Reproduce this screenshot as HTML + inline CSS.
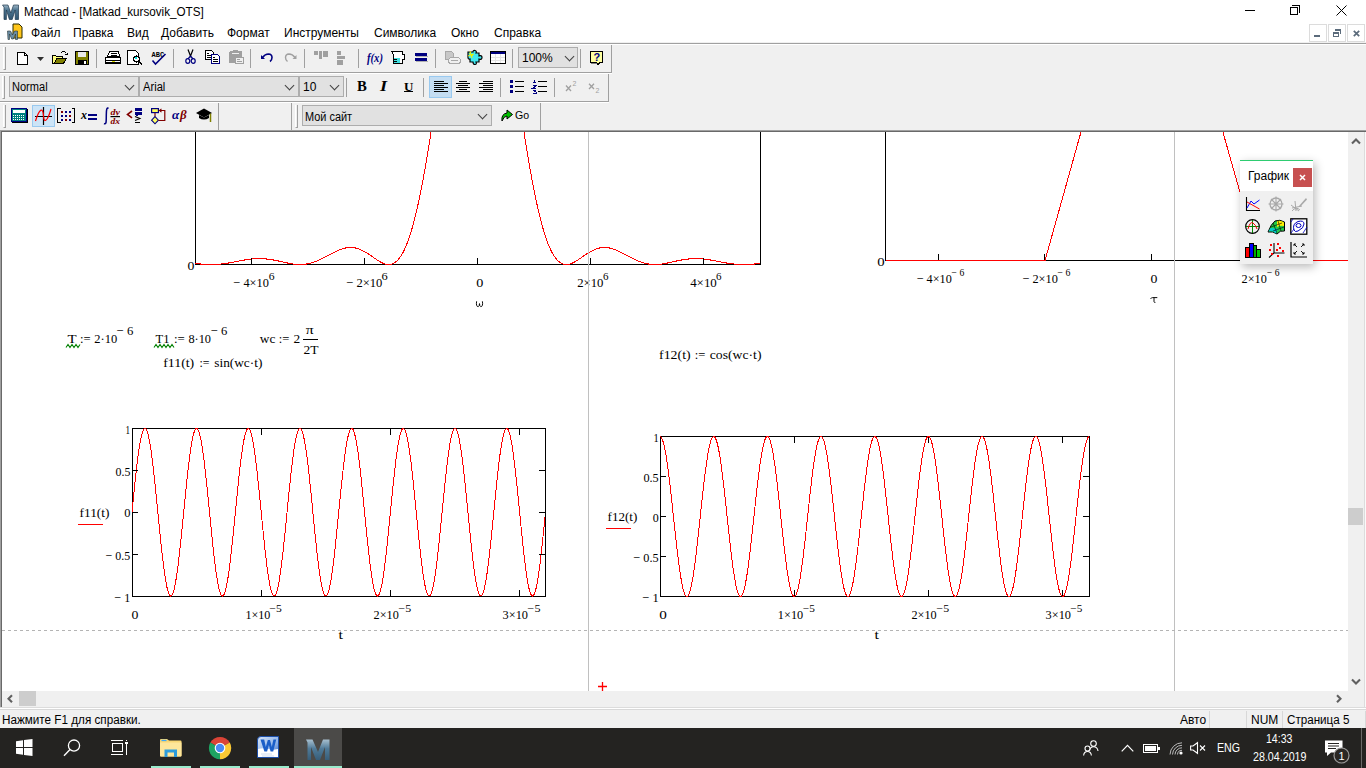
<!DOCTYPE html>
<html><head><meta charset="utf-8"><title>Mathcad</title>
<style>
*{box-sizing:border-box}
html,body{margin:0;padding:0}
body{width:1366px;height:768px;overflow:hidden;position:relative;background:#fff;font-family:"Liberation Sans",sans-serif;font-size:12px;color:#000}
.a{position:absolute}
.t{position:absolute;white-space:nowrap;line-height:1}
.tb{position:absolute;background:#f0f0f0}
.sep{position:absolute;width:1px;background:#a0a0a0}
.combo{position:absolute;background:#e1e1e1;border:1px solid #adadad}
.combo span{position:absolute;left:3px;top:3px;font-size:12px;color:#000;white-space:nowrap;line-height:14px}
.chev{position:absolute;width:7px;height:7px;border-right:1px solid #404040;border-bottom:1px solid #404040;transform:rotate(45deg)}
.grip{position:absolute;width:3px;border-left:1px solid #fff;border-right:1px solid #a0a0a0;border-bottom:1px solid #a0a0a0}
svg{position:absolute;overflow:visible}
</style></head>
<body>
<!-- title bar -->
<div class="a" style="left:0;top:0;width:1366px;height:43px;background:#fff"></div>
<svg style="left:2px;top:4px" width="17" height="16" viewBox="0 0 17 16">
 <defs><linearGradient id="tm" x1="0" y1="0" x2="0" y2="1"><stop offset="0" stop-color="#9fb6c6"/><stop offset="0.35" stop-color="#4d7590"/><stop offset="1" stop-color="#2f5470"/></linearGradient></defs>
 <path d="M0.5 1 H6 L8.8 9 L11.5 1 H16.5 V15.5 H13.2 V6 L10.2 15.5 H7.4 L4.4 6 V15.5 H2 V3.2 Z" fill="url(#tm)" stroke="#1f3a4f" stroke-width="0.7"/>
</svg>
<div class="t" id="title" style="left:24px;top:6px;font-size:12px;color:#000;transform:scaleX(0.973);transform-origin:0 0">Mathcad - [Matkad_kursovik_OTS]</div>
<div class="a" style="left:1245px;top:10px;width:10px;height:1px;background:#000"></div>
<div class="a" style="left:1290px;top:7px;width:8px;height:8px;border:1px solid #000"></div>
<div class="a" style="left:1292px;top:5px;width:8px;height:8px;border-top:1px solid #000;border-right:1px solid #000"></div>
<svg style="left:1336px;top:5px" width="11" height="11" viewBox="0 0 11 11"><path d="M0.5 0.5 L10.5 10.5 M10.5 0.5 L0.5 10.5" stroke="#000" stroke-width="1"/></svg>

<!-- menu bar -->
<svg style="left:7px;top:23px" width="16" height="17" viewBox="0 0 16 17">
 <path d="M6 1 H12 L15 4 V15 H6 Z" fill="#ffc61a" stroke="#2a2a00" stroke-width="1"/>
 <path d="M0.5 8 H3.5 L5.5 12 L7.5 8 H10.5 V16.5 H8.5 V11 L6.3 16 H4.7 L2.5 11 V16.5 H1 Z" fill="#6d8ea6" stroke="#233" stroke-width="0.6"/>
</svg>
<div class="t menu" style="left:31px;top:27px">Файл</div>
<div class="t menu" style="left:73px;top:27px">Правка</div>
<div class="t menu" style="left:127px;top:27px">Вид</div>
<div class="t menu" style="left:161px;top:27px">Добавить</div>
<div class="t menu" style="left:227px;top:27px">Формат</div>
<div class="t menu" style="left:284px;top:27px">Инструменты</div>
<div class="t menu" style="left:374px;top:27px">Символика</div>
<div class="t menu" style="left:451px;top:27px">Окно</div>
<div class="t menu" style="left:494px;top:27px">Справка</div>
<!-- MDI buttons -->
<div class="a" style="left:1309px;top:24px;width:18px;height:18px;border:1px solid #dcdcdc;background:#fff"></div>
<div class="a" style="left:1328px;top:24px;width:18px;height:18px;border:1px solid #dcdcdc;background:#fff"></div>
<div class="a" style="left:1347px;top:24px;width:18px;height:18px;border:1px solid #dcdcdc;background:#fff"></div>
<div class="a" style="left:1314px;top:35px;width:6px;height:2px;background:#5b6b7b"></div>
<svg style="left:1333px;top:29px" width="9" height="9" viewBox="0 0 9 9" shape-rendering="crispEdges">
 <rect x="2" y="0" width="6" height="2" fill="#5b6b7b"/><rect x="7" y="0" width="1" height="5" fill="#5b6b7b"/>
 <rect x="0" y="3" width="6" height="2" fill="#5b6b7b"/><rect x="0" y="3" width="1" height="5" fill="#5b6b7b"/><rect x="5" y="3" width="1" height="5" fill="#5b6b7b"/><rect x="0" y="7" width="6" height="1" fill="#5b6b7b"/>
</svg>
<svg style="left:1353px;top:30px" width="7" height="7" viewBox="0 0 7 7"><path d="M0.8 0.8 L6.2 6.2 M6.2 0.8 L0.8 6.2" stroke="#5b6b7b" stroke-width="1.7"/></svg>

<div class="a" style="left:0;top:42px;width:1366px;height:1px;background:#f0f0f0"></div><div class="a" style="left:0;top:43px;width:1366px;height:1px;background:#a0a0a0"></div>
<div class="a" style="left:0;top:44px;width:1366px;height:87px;background:#f0f0f0"></div>
<!-- ============ toolbar row 1 ============ -->
<div class="a" style="left:0;top:44px;width:1366px;height:1px;background:#fff"></div>
<div class="a" style="left:0;top:72px;width:612px;height:1px;background:#a0a0a0"></div>
<div class="a" style="left:0;top:73px;width:612px;height:1px;background:#fff"></div>
<div class="a" style="left:611px;top:45px;width:1px;height:28px;background:#a0a0a0"></div>
<div class="grip" style="left:3px;top:47px;height:23px"></div>
<div class="sep" style="left:96px;top:49px;height:19px"></div>
<div class="sep" style="left:173px;top:49px;height:19px"></div>
<div class="sep" style="left:250px;top:49px;height:19px"></div>
<div class="sep" style="left:304px;top:49px;height:19px"></div>
<div class="sep" style="left:358px;top:49px;height:19px"></div>
<div class="sep" style="left:435px;top:49px;height:19px"></div>
<div class="sep" style="left:512px;top:49px;height:19px"></div>
<div class="sep" style="left:580px;top:49px;height:19px"></div>

<!-- new -->
<svg style="left:17px;top:52px" width="12" height="14" viewBox="0 0 12 14" shape-rendering="crispEdges">
 <path d="M0.5 0.5 H7.5 L10.5 3.5 V12.5 H0.5 Z" fill="#fff" stroke="#000"/><path d="M7.5 0.5 V3.5 H10.5" fill="none" stroke="#000"/>
</svg>
<svg style="left:37px;top:57px" width="7" height="4" viewBox="0 0 7 4"><path d="M0 0 H7 L3.5 4Z" fill="#303030"/></svg>
<!-- open -->
<svg style="left:52px;top:51px" width="16" height="14" viewBox="0 0 16 14" shape-rendering="crispEdges">
 <path d="M0.5 4.5 H3.5 L4.5 5.5 H10.5 V7.5 H14.5 L11.5 12.5 H0.5 Z" fill="#ffff80" stroke="#000"/>
 <path d="M2.5 12.5 L4.5 7.5 H14.5 L11.5 12.5 Z" fill="#808000" stroke="#000"/>
 <path d="M8.5 2.5 L10.5 0.5 H12.5 L14.5 2.5 M13 3.5 H15 V1.5" fill="none" stroke="#000"/>
</svg>
<!-- save -->
<svg style="left:75px;top:51px" width="15" height="14" viewBox="0 0 15 14" shape-rendering="crispEdges">
 <rect x="0.5" y="0.5" width="13" height="13" fill="#808000" stroke="#000"/>
 <rect x="3" y="1" width="8" height="5" fill="#e8e8e8"/>
 <rect x="3" y="9" width="9" height="4" fill="#000"/>
 <rect x="9" y="10" width="2" height="3" fill="#fff"/>
</svg>
<!-- print -->
<svg style="left:105px;top:51px" width="17" height="14" viewBox="0 0 17 14" shape-rendering="crispEdges">
 <path d="M4.5 0.5 H13.5 L14.5 5.5 H2.5 Z" fill="#fff" stroke="#000"/>
 <path d="M5.5 2.5 H12 M5.5 4 H12" stroke="#000"/>
 <path d="M0.5 6.5 H15.5 V12.5 H0.5 Z" fill="#fff" stroke="#000"/>
 <path d="M1 9.5 H15 M1 11 H15" stroke="#000"/>
 <rect x="7" y="10" width="3" height="1" fill="#e0e000"/>
</svg>
<!-- preview -->
<svg style="left:127px;top:50px" width="17" height="16" viewBox="0 0 17 16" shape-rendering="crispEdges">
 <path d="M0.5 0.5 H8.5 L11.5 3.5 V14.5 H0.5 Z" fill="#fff" stroke="#000"/>
 <circle cx="9.5" cy="9" r="3" fill="#fff" stroke="#000" stroke-width="1.2"/>
 <path d="M8 8 h2" stroke="#00e0e0" stroke-width="2"/>
 <path d="M11.5 11 L15 14.5" stroke="#000" stroke-width="2"/>
</svg>
<!-- spell -->
<svg style="left:151px;top:50px" width="16" height="16" viewBox="0 0 16 16">
 <text x="0.5" y="6.5" font-family="Liberation Mono" font-size="7" font-weight="bold" fill="#000">ABC</text>
 <path d="M1.5 10.5 L4.5 14 L14.5 4" fill="none" stroke="#000080" stroke-width="1.6"/>
</svg>
<!-- cut -->
<svg style="left:185px;top:49px" width="11" height="15" viewBox="0 0 11 15">
 <path d="M3 0.5 L5.5 7 L8 0.5" fill="none" stroke="#000" stroke-width="1.2"/>
 <path d="M5.5 7 L3 10 M5.5 7 L8 10" stroke="#000080" stroke-width="1.2"/>
 <ellipse cx="2.8" cy="12" rx="2" ry="2.3" fill="none" stroke="#000080" stroke-width="1.2"/>
 <ellipse cx="8.2" cy="12" rx="2" ry="2.3" fill="none" stroke="#000080" stroke-width="1.2"/>
</svg>
<!-- copy -->
<svg style="left:205px;top:50px" width="17" height="14" viewBox="0 0 17 14" shape-rendering="crispEdges">
 <path d="M0.5 0.5 H6.5 L8.5 2.5 V9.5 H0.5 Z" fill="#fff" stroke="#000"/>
 <path d="M2 3.5 H4 M2 5.5 H6 M2 7.5 H6" stroke="#000"/>
 <path d="M6.5 4.5 H12.5 L14.5 6.5 V13.5 H6.5 Z" fill="#fff" stroke="#000080"/>
 <path d="M8 7.5 H10 M8 9.5 H13 M8 11.5 H13" stroke="#000"/>
</svg>
<!-- paste (disabled) -->
<svg style="left:229px;top:50px" width="16" height="14" viewBox="0 0 16 14" shape-rendering="crispEdges">
 <rect x="0" y="1" width="13" height="12" rx="2" fill="#a0a0a0"/>
 <rect x="4" y="0" width="5" height="2" fill="#a0a0a0"/>
 <rect x="3" y="3" width="7" height="1" fill="#f0f0f0"/>
 <rect x="6.5" y="7.5" width="8" height="6" fill="#f0f0f0" stroke="#a0a0a0"/>
 <path d="M8 9.5 H11 M8 11.5 H13" stroke="#a0a0a0"/>
</svg>
<!-- undo -->
<svg style="left:261px;top:53px" width="13" height="11" viewBox="0 0 13 11">
 <path d="M0 2 L0 6 L4 6 Z" fill="#000080"/>
 <path d="M1.5 4.5 Q4 1 7.5 1 Q11 1.2 11 4.5 Q11 7 9 8.5" fill="none" stroke="#000080" stroke-width="1.6"/>
</svg>
<!-- redo (disabled) -->
<svg style="left:284px;top:53px" width="13" height="11" viewBox="0 0 13 11">
 <path d="M12.5 2 L12.5 6 L8.5 6 Z" fill="#a0a0a0"/>
 <path d="M11 4.5 Q8.5 1 5 1 Q1.5 1.2 1.5 4.5 Q1.5 7 3.5 8.5" fill="none" stroke="#a0a0a0" stroke-width="1.4"/>
</svg>
<!-- align (disabled) -->
<svg style="left:314px;top:51px" width="15" height="8" viewBox="0 0 15 8" shape-rendering="crispEdges">
 <rect x="0" y="0" width="4" height="4" fill="#a0a0a0"/><rect x="5" y="0" width="3" height="8" fill="#a0a0a0"/><rect x="9" y="0" width="5" height="6" fill="#a0a0a0"/>
</svg>
<svg style="left:337px;top:51px" width="9" height="14" viewBox="0 0 9 14" shape-rendering="crispEdges">
 <rect x="0" y="0" width="4" height="4" fill="#a0a0a0"/><rect x="0" y="5" width="8" height="3" fill="#a0a0a0"/><rect x="0" y="9" width="6" height="5" fill="#a0a0a0"/>
</svg>
<!-- f(x) -->
<svg style="left:367px;top:51px" width="17" height="14" viewBox="0 0 17 14">
 <text x="0" y="11" font-family="Liberation Serif" font-style="italic" font-weight="bold" font-size="13" fill="#000080" textLength="16" lengthAdjust="spacingAndGlyphs">f(x)</text>
</svg>
<!-- calc -->
<svg style="left:391px;top:51px" width="15" height="14" viewBox="0 0 15 14" shape-rendering="crispEdges">
 <path d="M0.5 0.5 H11.5 V3.5 H13.5 V8.5 H11.5 V12.5 H2.5 V3.5 Z" fill="#fff" stroke="#000"/>
 <rect x="3" y="7" width="6" height="5" fill="#40e0e0"/>
 <path d="M3 8.5 h3 M3 10.5 h3" stroke="#000"/>
</svg>
<!-- equals -->
<svg style="left:415px;top:52px" width="13" height="11" viewBox="0 0 13 11" shape-rendering="crispEdges">
 <rect x="0" y="1" width="12" height="3" fill="#000080"/><rect x="0" y="6" width="12" height="3" fill="#000080"/>
 <rect x="1" y="4" width="12" height="1" fill="#b0b0b0"/><rect x="1" y="9" width="12" height="1" fill="#b0b0b0"/>
</svg>
<!-- link (disabled) -->
<svg style="left:445px;top:51px" width="16" height="13" viewBox="0 0 16 13" shape-rendering="crispEdges">
 <path d="M0.5 0.5 H6.5 L8.5 2.5 V8.5 H0.5 Z" fill="#c8c8c8" stroke="#a8a8a8"/>
 <rect x="3.5" y="6.5" width="12" height="6" rx="3" fill="#f0f0f0" stroke="#a8a8a8"/>
 <rect x="6" y="9" width="7" height="1" fill="#a8a8a8"/>
</svg>
<!-- component (puzzle) -->
<svg style="left:467px;top:50px" width="16" height="15" viewBox="0 0 16 15">
 <path d="M1 2 H6 Q6 0 8 0.5 Q10 1 9 3 H12 V6 Q15 5 15 7.5 Q15 10 12 9 V12 H9 Q10 14.5 8 14.5 Q6 14.5 6 12 H3 V9 Q1 9.5 1 7.5 Z" fill="#40e8f0" stroke="#000" stroke-width="1.2"/>
 <path d="M2 3 L6 6 M3 1 L5 8 M1 6 L7 4" stroke="#f0f000" stroke-width="1"/>
</svg>
<!-- table -->
<svg style="left:490px;top:51px" width="17" height="14" viewBox="0 0 17 14" shape-rendering="crispEdges">
 <rect x="0.5" y="0.5" width="15" height="12" fill="#fff" stroke="#000"/>
 <rect x="1" y="1" width="14" height="2" fill="#000080"/>
 <path d="M1 6.5 H15 M1 9.5 H15 M5.5 3 V12 M10.5 3 V12" stroke="#e4e4e4"/>
</svg>
<!-- zoom combo -->
<div class="combo" style="left:518px;top:47px;width:60px;height:21px"><span style="top:3px;left:3px" id="zoomtxt">100%</span><div class="chev" style="left:47px;top:5px"></div></div>
<!-- help -->
<svg style="left:590px;top:51px" width="14" height="15" viewBox="0 0 14 15" shape-rendering="crispEdges">
 <path d="M0.5 0.5 H12.5 V11.5 H9.5 L8 14 L6.5 11.5 H0.5 Z" fill="#ffffa0" stroke="#000" stroke-width="1.2"/>
 <rect x="1" y="12" width="6" height="1" fill="#808080"/>
 <text x="3.5" y="10" font-family="Liberation Sans" font-weight="bold" font-size="11" fill="#000080">?</text>
</svg>

<!-- ============ toolbar row 2 ============ -->
<div class="a" style="left:0;top:101px;width:609px;height:1px;background:#a0a0a0"></div>
<div class="a" style="left:0;top:102px;width:609px;height:1px;background:#fff"></div>
<div class="a" style="left:608px;top:74px;width:1px;height:28px;background:#a0a0a0"></div>
<div class="grip" style="left:2px;top:76px;height:23px"></div>
<div class="combo" style="left:9px;top:76px;width:130px;height:21px"><span id="normtxt" style="left:2px;transform:scaleX(0.92);transform-origin:0 0">Normal</span><div class="chev" style="left:116px;top:5px"></div></div>
<div class="combo" style="left:139px;top:76px;width:160px;height:21px"><span id="arialtxt" style="transform:scaleX(0.93);transform-origin:0 0">Arial</span><div class="chev" style="left:146px;top:5px"></div></div>
<div class="combo" style="left:299px;top:76px;width:45px;height:21px"><span id="tentxt">10</span><div class="chev" style="left:31px;top:5px"></div></div>
<div class="sep" style="left:346px;top:78px;height:19px"></div>
<div class="sep" style="left:423px;top:78px;height:19px"></div>
<div class="sep" style="left:500px;top:78px;height:19px"></div>
<div class="sep" style="left:554px;top:78px;height:19px"></div>
<div class="t" style="left:357px;top:80px;font-family:'Liberation Serif';font-weight:bold;font-size:14px;transform:scaleX(1.05);transform-origin:0 0">B</div>
<div class="t" style="left:380px;top:80px;font-family:'Liberation Serif';font-weight:bold;font-style:italic;font-size:14px;transform:scaleX(1.3);transform-origin:0 0">I</div>
<div class="t" style="left:404px;top:80px;font-family:'Liberation Serif';font-weight:bold;font-size:13px">U</div>
<div class="a" style="left:404px;top:91px;width:9px;height:1px;background:#000"></div>
<div class="a" style="left:429px;top:76px;width:23px;height:22px;background:#c4ddf2;border:1px solid #99c9ef"></div>
<svg style="left:430px;top:78px" width="70" height="16" viewBox="430 78 70 16" shape-rendering="crispEdges">
 <path d="M434 81.5 H444 M434 83.5 H448 M434 85.5 H444 M434 87.5 H448 M434 89.5 H444 M434 91.5 H448" stroke="#000"/>
 <path d="M459 81.5 H467 M456 83.5 H470 M458 85.5 H468 M456 87.5 H470 M459 89.5 H467 M456 91.5 H470" stroke="#000"/>
 <path d="M483 81.5 H493 M479 83.5 H493 M483 85.5 H493 M479 87.5 H493 M483 89.5 H493 M479 91.5 H493" stroke="#000"/>
</svg>
<svg style="left:508px;top:78px" width="42" height="18" viewBox="508 78 42 18" shape-rendering="crispEdges">
 <rect x="510" y="80" width="3" height="3" fill="#000080"/><rect x="510" y="85" width="3" height="3" fill="#000080"/><rect x="510" y="90" width="3" height="3" fill="#000080"/>
 <path d="M515 81.5 H524 M515 86.5 H524 M515 91.5 H524" stroke="#000"/>
 <path d="M534.5 80 V83 M533 82.5 H536" stroke="#000080"/>
 <path d="M533 85 H536 V86 L533 88 H536" fill="none" stroke="#000080"/>
 <path d="M533 90 H536 L534 91 L536 92 V93 H533" fill="none" stroke="#000080"/>
 <path d="M538 81.5 H547 M538 86.5 H547 M538 91.5 H547" stroke="#000"/>
</svg>
<svg style="left:565px;top:80px" width="36" height="14" viewBox="565 80 36 14">
 <path d="M566 85.5 L571 91 M571 85.5 L566 91" stroke="#a0a0a0" stroke-width="1.3"/>
 <text x="572.5" y="85.8" font-family="Liberation Sans" font-size="7" fill="#a0a0a0">2</text>
 <path d="M589 83.8 L594 89 M594 83.8 L589 89" stroke="#a0a0a0" stroke-width="1.3"/>
 <text x="595.5" y="92.8" font-family="Liberation Sans" font-size="7" fill="#a0a0a0">2</text>
</svg>
<!-- ============ toolbar row 3 ============ -->
<div class="grip" style="left:3px;top:105px;height:23px"></div>
<div class="a" style="left:218px;top:103px;width:1px;height:27px;background:#a0a0a0"></div>
<div class="a" style="left:291px;top:103px;width:1px;height:27px;background:#a0a0a0"></div>
<div class="grip" style="left:295px;top:105px;height:23px"></div>
<div class="a" style="left:540px;top:103px;width:1px;height:27px;background:#a0a0a0"></div>
<!-- calculator -->
<svg style="left:11px;top:108px" width="17" height="15" viewBox="0 0 17 15" shape-rendering="crispEdges">
 <rect x="0.5" y="0.5" width="15" height="13" fill="#008080" stroke="#000080"/>
 <rect x="1" y="14" width="16" height="1" fill="#000"/><rect x="16" y="1" width="1" height="14" fill="#000"/>
 <rect x="2" y="2" width="12" height="3" fill="#fff"/>
 <path d="M2 7 H14 M2 9 H14 M2 11 H14" stroke="#fff" stroke-dasharray="1,1"/>
</svg>
<!-- graph (highlighted) -->
<div class="a" style="left:32px;top:105px;width:23px;height:22px;background:#cce4f7;border:1px solid #99c9ef"></div>
<svg style="left:35px;top:107px" width="17" height="18" viewBox="0 0 17 18">
 <path d="M8.5 0 V18 M0 9.5 H17" stroke="#000" stroke-width="1.2"/>
 <path d="M0.5 14 Q3 6 5 4 Q8 1 8.5 9 Q9 16 12 12 Q14 9 16 2" fill="none" stroke="#ff0000" stroke-width="1.2"/>
</svg>
<!-- matrix -->
<svg style="left:57px;top:108px" width="18" height="15" viewBox="0 0 18 15" shape-rendering="crispEdges">
 <path d="M3.5 0.5 H0.5 V14.5 H3.5 M14.5 0.5 H17.5 V14.5 H14.5" fill="none" stroke="#000"/>
 <g fill="#000080"><rect x="4" y="3" width="2" height="2"/><rect x="8" y="3" width="2" height="2"/><rect x="12" y="3" width="2" height="2"/><rect x="4" y="7" width="2" height="2"/><rect x="8" y="7" width="2" height="2"/><rect x="12" y="7" width="2" height="2"/><rect x="4" y="11" width="2" height="2"/><rect x="8" y="11" width="2" height="2"/><rect x="12" y="11" width="2" height="2"/></g>
 <g fill="#800000"><rect x="4" y="3" width="2" height="2"/><rect x="12" y="7" width="2" height="2"/><rect x="8" y="11" width="2" height="2"/></g>
</svg>
<!-- x= -->
<svg style="left:81px;top:108px" width="16" height="15" viewBox="0 0 16 15">
 <text x="0" y="11" font-family="Liberation Serif" font-style="italic" font-weight="bold" font-size="12" fill="#000">x</text>
 <rect x="7" y="6" width="9" height="2" fill="#000080"/><rect x="7" y="10" width="9" height="2" fill="#000080"/>
</svg>
<!-- calculus -->
<svg style="left:103px;top:107px" width="19" height="18" viewBox="0 0 19 18">
 <path d="M5.5 1.5 Q4.5 0.3 3.8 2 Q3.3 3.5 3.3 8 Q3.3 14 3 15.5 Q2.6 17.3 1 16.5" fill="none" stroke="#000080" stroke-width="1.5"/>
 <text x="7.6" y="7.8" font-family="Liberation Serif" font-style="italic" font-weight="bold" font-size="9" fill="#800000" textLength="9.5" lengthAdjust="spacingAndGlyphs">dy</text>
 <rect x="7.5" y="9" width="9.5" height="1.2" fill="#000"/>
 <text x="7.6" y="16.6" font-family="Liberation Serif" font-style="italic" font-weight="bold" font-size="9" fill="#800000" textLength="9.5" lengthAdjust="spacingAndGlyphs">dx</text>
</svg>
<!-- boolean -->
<svg style="left:126px;top:107px" width="18" height="17" viewBox="126 107 18 17" shape-rendering="crispEdges">
 <path d="M132 111 L127.5 114.4 L132 117.8" fill="none" stroke="#800000" stroke-width="1.6" shape-rendering="auto"/>
 <rect x="135" y="108" width="7" height="2.5" fill="#000080"/>
 <rect x="135" y="112" width="7" height="2.8" fill="#000080"/>
 <rect x="140" y="107.5" width="2" height="2" fill="#000080"/>
 <rect x="136" y="114.5" width="2" height="1.5" fill="#000080"/>
 <path d="M135 116.5 L140 118.6 L135 120.6" fill="none" stroke="#000" stroke-width="1.1" shape-rendering="auto"/>
 <rect x="135" y="122" width="5" height="1" fill="#000"/>
</svg>
<!-- programming -->
<svg style="left:150px;top:107px" width="17" height="18" viewBox="150 107 17 18">
 <rect x="151.6" y="108.6" width="6.8" height="4" fill="#ffff60" stroke="#000080" stroke-width="1.2"/>
 <path d="M155 113 V116.5" stroke="#800000" stroke-width="1.2"/>
 <path d="M155 116.6 L158.4 120.2 L155 123.8 L151.6 120.2 Z" fill="#ffff60" stroke="#000080" stroke-width="1.1"/>
 <path d="M158.5 120.5 H164.8 V110.5 H160" fill="none" stroke="#800000" stroke-width="1.2"/>
 <path d="M161.5 108.8 L159.5 110.5 L161.5 112.2" fill="none" stroke="#800000" stroke-width="1.1"/>
</svg>
<!-- greek -->
<svg style="left:172px;top:108px" width="18" height="16" viewBox="0 0 18 16">
 <text x="0" y="11" font-family="Liberation Serif" font-style="italic" font-weight="bold" font-size="13" fill="#000080">α</text>
 <text x="8" y="11" font-family="Liberation Serif" font-style="italic" font-weight="bold" font-size="13" fill="#800000">β</text>
</svg>
<!-- hat -->
<svg style="left:196px;top:108px" width="17" height="15" viewBox="0 0 17 15">
 <path d="M0 5 L8 0.5 L16 5 L8 9.5 Z" fill="#000"/>
 <path d="M3 7 V10 Q8 13 13 10 V7 L8 9.5 Z" fill="#000"/>
 <path d="M14.5 5.5 V14" stroke="#808000" stroke-width="1.5"/>
</svg>
<!-- my site combo -->
<div class="combo" style="left:302px;top:105px;width:190px;height:21px"><span id="sitetxt" style="left:2px;top:4px;transform:scaleX(0.91);transform-origin:0 0">Мой сайт</span><div class="chev" style="left:176px;top:5px"></div></div>
<svg style="left:500px;top:108px" width="13" height="14" viewBox="0 0 13 14">
 <path d="M2 13 Q1 6 7 5 V2 L12.5 6.5 L7 11 V8 Q4 8 2 13Z" fill="#00c000" stroke="#000" stroke-width="1"/>
</svg>
<div class="t" id="gotxt" style="left:515px;top:110px;font-size:11.5px;transform:scaleX(0.92);transform-origin:0 0">Go</div>


<!-- document -->
<div class="a" style="left:0;top:130px;width:1366px;height:577px;background:#a0a0a0"></div>
<div class="a" style="left:1px;top:131px;width:1365px;height:576px;background:#696969"></div>
<div class="a" style="left:2px;top:132px;width:1346px;height:559px;background:#fff;overflow:hidden">
<svg width="1346" height="559" viewBox="2 132 1346 559" style="left:0;top:0;position:absolute;overflow:hidden" font-family="Liberation Serif" font-size="13.5">
<!-- frames / axes -->
<g shape-rendering="crispEdges" stroke="#000" stroke-width="1" fill="none">
 <line x1="195.5" y1="132" x2="195.5" y2="265"/>
 <line x1="760.5" y1="132" x2="760.5" y2="265"/>
 <line x1="195" y1="264.5" x2="761" y2="264.5"/>
 <line x1="885.5" y1="132" x2="885.5" y2="261"/>
 <line x1="885" y1="260.5" x2="1348" y2="260.5"/>
 <rect x="132.5" y="428.5" width="413" height="167.5"/>
 <rect x="660.5" y="436.5" width="429" height="159.5"/>
</g>
<!-- traces -->
<g fill="none" stroke="#ff0000" stroke-width="1" shape-rendering="crispEdges">
 <polyline points="195.0,263.4 195.5,263.5 196.0,263.5 196.5,263.6 197.0,263.6 197.5,263.7 198.0,263.7 198.5,263.8 199.0,263.8 199.5,263.9 200.0,263.9 200.5,264.0 201.0,264.0 201.5,264.1 202.0,264.1 202.5,264.1 203.0,264.2 203.5,264.2 204.0,264.3 204.5,264.3 205.0,264.3 205.5,264.3 206.0,264.4 206.5,264.4 207.0,264.4 207.5,264.4 208.0,264.4 208.5,264.5 209.0,264.5 209.5,264.5 210.0,264.5 210.5,264.5 211.0,264.5 211.5,264.5 212.0,264.5 212.5,264.5 213.0,264.5 213.5,264.5 214.0,264.5 214.5,264.4 215.0,264.4 215.5,264.4 216.0,264.4 216.5,264.4 217.0,264.3 217.5,264.3 218.0,264.3 218.5,264.2 219.0,264.2 219.5,264.1 220.0,264.1 220.5,264.1 221.0,264.0 221.5,263.9 222.0,263.9 222.5,263.8 223.0,263.8 223.5,263.7 224.0,263.6 224.5,263.6 225.0,263.5 225.5,263.4 226.0,263.4 226.5,263.3 227.0,263.2 227.5,263.1 228.0,263.1 228.5,263.0 229.0,262.9 229.5,262.8 230.0,262.7 230.5,262.6 231.0,262.5 231.5,262.5 232.0,262.4 232.5,262.3 233.0,262.2 233.5,262.1 234.0,262.0 234.5,261.9 235.0,261.8 235.5,261.7 236.0,261.6 236.5,261.5 237.0,261.4 237.5,261.3 238.0,261.2 238.5,261.1 239.0,261.0 239.5,260.9 240.0,260.8 240.5,260.7 241.0,260.6 241.5,260.5 242.0,260.4 242.5,260.3 243.0,260.3 243.5,260.2 244.0,260.1 244.5,260.0 245.0,259.9 245.5,259.8 246.0,259.7 246.5,259.7 247.0,259.6 247.5,259.5 248.0,259.4 248.5,259.4 249.0,259.3 249.5,259.2 250.0,259.2 250.5,259.1 251.0,259.0 251.5,259.0 252.0,258.9 252.5,258.9 253.0,258.8 253.5,258.8 254.0,258.8 254.5,258.7 255.0,258.7 255.5,258.7 256.0,258.6 256.5,258.6 257.0,258.6 257.5,258.6 258.0,258.6 258.5,258.6 259.0,258.6 259.5,258.6 260.0,258.6 260.5,258.6 261.0,258.6 261.5,258.6 262.0,258.6 262.5,258.6 263.0,258.7 263.5,258.7 264.0,258.7 264.5,258.8 265.0,258.8 265.5,258.9 266.0,258.9 266.5,259.0 267.0,259.0 267.5,259.1 268.0,259.1 268.5,259.2 269.0,259.3 269.5,259.3 270.0,259.4 270.5,259.5 271.0,259.6 271.5,259.7 272.0,259.7 272.5,259.8 273.0,259.9 273.5,260.0 274.0,260.1 274.5,260.2 275.0,260.3 275.5,260.4 276.0,260.5 276.5,260.6 277.0,260.7 277.5,260.8 278.0,260.9 278.5,261.0 279.0,261.2 279.5,261.3 280.0,261.4 280.5,261.5 281.0,261.6 281.5,261.7 282.0,261.8 282.5,262.0 283.0,262.1 283.5,262.2 284.0,262.3 284.5,262.4 285.0,262.5 285.5,262.6 286.0,262.7 286.5,262.8 287.0,262.9 287.5,263.0 288.0,263.1 288.5,263.2 289.0,263.3 289.5,263.4 290.0,263.5 290.5,263.6 291.0,263.7 291.5,263.8 292.0,263.8 292.5,263.9 293.0,264.0 293.5,264.1 294.0,264.1 294.5,264.2 295.0,264.2 295.5,264.3 296.0,264.3 296.5,264.4 297.0,264.4 297.5,264.4 298.0,264.5 298.5,264.5 299.0,264.5 299.5,264.5 300.0,264.5 300.5,264.5 301.0,264.5 301.5,264.5 302.0,264.5 302.5,264.4 303.0,264.4 303.5,264.4 304.0,264.3 304.5,264.3 305.0,264.2 305.5,264.1 306.0,264.1 306.5,264.0 307.0,263.9 307.5,263.8 308.0,263.7 308.5,263.6 309.0,263.5 309.5,263.4 310.0,263.3 310.5,263.1 311.0,263.0 311.5,262.9 312.0,262.7 312.5,262.6 313.0,262.4 313.5,262.2 314.0,262.1 314.5,261.9 315.0,261.7 315.5,261.5 316.0,261.3 316.5,261.1 317.0,260.9 317.5,260.7 318.0,260.5 318.5,260.3 319.0,260.1 319.5,259.8 320.0,259.6 320.5,259.4 321.0,259.1 321.5,258.9 322.0,258.6 322.5,258.4 323.0,258.1 323.5,257.9 324.0,257.6 324.5,257.4 325.0,257.1 325.5,256.8 326.0,256.6 326.5,256.3 327.0,256.0 327.5,255.8 328.0,255.5 328.5,255.2 329.0,255.0 329.5,254.7 330.0,254.4 330.5,254.2 331.0,253.9 331.5,253.6 332.0,253.4 332.5,253.1 333.0,252.9 333.5,252.6 334.0,252.3 334.5,252.1 335.0,251.9 335.5,251.6 336.0,251.4 336.5,251.1 337.0,250.9 337.5,250.7 338.0,250.5 338.5,250.3 339.0,250.1 339.5,249.9 340.0,249.7 340.5,249.5 341.0,249.3 341.5,249.1 342.0,249.0 342.5,248.8 343.0,248.7 343.5,248.5 344.0,248.4 344.5,248.3 345.0,248.1 345.5,248.0 346.0,247.9 346.5,247.9 347.0,247.8 347.5,247.7 348.0,247.6 348.5,247.6 349.0,247.6 349.5,247.5 350.0,247.5 350.5,247.5 351.0,247.5 351.5,247.5 352.0,247.6 352.5,247.6 353.0,247.6 353.5,247.7 354.0,247.8 354.5,247.8 355.0,247.9 355.5,248.0 356.0,248.2 356.5,248.3 357.0,248.4 357.5,248.6 358.0,248.7 358.5,248.9 359.0,249.1 359.5,249.2 360.0,249.4 360.5,249.6 361.0,249.9 361.5,250.1 362.0,250.3 362.5,250.6 363.0,250.8 363.5,251.1 364.0,251.3 364.5,251.6 365.0,251.9 365.5,252.2 366.0,252.5 366.5,252.8 367.0,253.1 367.5,253.4 368.0,253.7 368.5,254.1 369.0,254.4 369.5,254.7 370.0,255.1 370.5,255.4 371.0,255.7 371.5,256.1 372.0,256.4 372.5,256.8 373.0,257.1 373.5,257.5 374.0,257.8 374.5,258.2 375.0,258.5 375.5,258.9 376.0,259.2 376.5,259.5 377.0,259.9 377.5,260.2 378.0,260.5 378.5,260.8 379.0,261.1 379.5,261.4 380.0,261.7 380.5,262.0 381.0,262.2 381.5,262.5 382.0,262.7 382.5,263.0 383.0,263.2 383.5,263.4 384.0,263.6 384.5,263.8 385.0,263.9 385.5,264.1 386.0,264.2 386.5,264.3 387.0,264.4 387.5,264.4 388.0,264.5 388.5,264.5 389.0,264.5 389.5,264.5 390.0,264.4 390.5,264.4 391.0,264.3 391.5,264.1 392.0,264.0 392.5,263.8 393.0,263.6 393.5,263.4 394.0,263.1 394.5,262.8 395.0,262.5 395.5,262.1 396.0,261.7 396.5,261.3 397.0,260.8 397.5,260.3 398.0,259.8 398.5,259.2 399.0,258.6 399.5,258.0 400.0,257.3 400.5,256.6 401.0,255.8 401.5,255.0 402.0,254.2 402.5,253.3 403.0,252.4 403.5,251.5 404.0,250.5 404.5,249.4 405.0,248.3 405.5,247.2 406.0,246.0 406.5,244.8 407.0,243.6 407.5,242.2 408.0,240.9 408.5,239.5 409.0,238.1 409.5,236.6 410.0,235.1 410.5,233.5 411.0,231.9 411.5,230.2 412.0,228.5 412.5,226.7 413.0,224.9 413.5,223.1 414.0,221.2 414.5,219.3 415.0,217.3 415.5,215.3 416.0,213.2 416.5,211.1 417.0,208.9 417.5,206.7 418.0,204.5 418.5,202.2 419.0,199.8 419.5,197.5 420.0,195.0 420.5,192.6 421.0,190.1 421.5,187.5 422.0,185.0 422.5,182.3 423.0,179.7 423.5,177.0 424.0,174.2 424.5,171.5 425.0,168.7 425.5,165.8 426.0,162.9 426.5,160.0 427.0,157.1 427.5,154.1 428.0,151.1 428.5,148.0 429.0,144.9 429.5,141.8 430.0,138.7 430.5,135.6 431.0,132.4 431.5,129.2 432.0,125.9 432.5,122.7 433.0,119.4 433.5,116.1 434.0,112.8 434.5,109.5 435.0,106.1 435.5,102.8 436.0,99.4 436.5,96.0 437.0,92.6 437.5,89.2 438.0,85.8 438.5,82.4 439.0,78.9 439.5,75.5 440.0,72.1 440.5,68.6 441.0,65.2 441.5,61.7 442.0,58.3 442.5,54.9 443.0,51.4 443.5,48.0 444.0,44.6 444.5,41.2 445.0,37.8 445.5,34.4 446.0,31.0 446.5,27.7 447.0,24.4 447.5,21.0 448.0,17.7 448.5,14.5 449.0,11.2 449.5,8.0 450.0,4.8 450.5,1.6 451.0,-1.5 451.5,-4.7 452.0,-7.8 452.5,-10.8 453.0,-13.8 453.5,-16.8 454.0,-19.8 454.5,-22.7 455.0,-25.5 455.5,-28.4 456.0,-31.1 456.5,-33.9 457.0,-36.6 457.5,-39.2 458.0,-41.8 458.5,-44.4 459.0,-46.9 459.5,-49.3 460.0,-51.7 460.5,-54.1 461.0,-56.4 461.5,-58.6 462.0,-60.8 462.5,-62.9 463.0,-65.0 463.5,-67.0 464.0,-68.9 464.5,-70.8 465.0,-72.6 465.5,-74.4 466.0,-76.0 466.5,-77.7 467.0,-79.2 467.5,-80.7 468.0,-82.1 468.5,-83.5 469.0,-84.8 469.5,-86.0 470.0,-87.1 470.5,-88.2 471.0,-89.2 471.5,-90.1 472.0,-91.0 472.5,-91.8 473.0,-92.5 473.5,-93.1 474.0,-93.7 474.5,-94.1 475.0,-94.6 475.5,-94.9 476.0,-95.2 476.5,-95.3 477.0,-95.5 477.5,-95.5 478.0,-95.5 478.5,-95.3 479.0,-95.2 479.5,-94.9 480.0,-94.6 480.5,-94.1 481.0,-93.7 481.5,-93.1 482.0,-92.5 482.5,-91.8 483.0,-91.0 483.5,-90.1 484.0,-89.2 484.5,-88.2 485.0,-87.1 485.5,-86.0 486.0,-84.8 486.5,-83.5 487.0,-82.1 487.5,-80.7 488.0,-79.2 488.5,-77.7 489.0,-76.0 489.5,-74.4 490.0,-72.6 490.5,-70.8 491.0,-68.9 491.5,-67.0 492.0,-65.0 492.5,-62.9 493.0,-60.8 493.5,-58.6 494.0,-56.4 494.5,-54.1 495.0,-51.7 495.5,-49.3 496.0,-46.9 496.5,-44.4 497.0,-41.8 497.5,-39.2 498.0,-36.6 498.5,-33.9 499.0,-31.1 499.5,-28.4 500.0,-25.5 500.5,-22.7 501.0,-19.8 501.5,-16.8 502.0,-13.8 502.5,-10.8 503.0,-7.8 503.5,-4.7 504.0,-1.5 504.5,1.6 505.0,4.8 505.5,8.0 506.0,11.2 506.5,14.5 507.0,17.7 507.5,21.0 508.0,24.4 508.5,27.7 509.0,31.0 509.5,34.4 510.0,37.8 510.5,41.2 511.0,44.6 511.5,48.0 512.0,51.4 512.5,54.9 513.0,58.3 513.5,61.7 514.0,65.2 514.5,68.6 515.0,72.1 515.5,75.5 516.0,78.9 516.5,82.4 517.0,85.8 517.5,89.2 518.0,92.6 518.5,96.0 519.0,99.4 519.5,102.8 520.0,106.1 520.5,109.5 521.0,112.8 521.5,116.1 522.0,119.4 522.5,122.7 523.0,125.9 523.5,129.2 524.0,132.4 524.5,135.6 525.0,138.7 525.5,141.8 526.0,144.9 526.5,148.0 527.0,151.1 527.5,154.1 528.0,157.1 528.5,160.0 529.0,162.9 529.5,165.8 530.0,168.7 530.5,171.5 531.0,174.2 531.5,177.0 532.0,179.7 532.5,182.3 533.0,185.0 533.5,187.5 534.0,190.1 534.5,192.6 535.0,195.0 535.5,197.5 536.0,199.8 536.5,202.2 537.0,204.5 537.5,206.7 538.0,208.9 538.5,211.1 539.0,213.2 539.5,215.3 540.0,217.3 540.5,219.3 541.0,221.2 541.5,223.1 542.0,224.9 542.5,226.7 543.0,228.5 543.5,230.2 544.0,231.9 544.5,233.5 545.0,235.1 545.5,236.6 546.0,238.1 546.5,239.5 547.0,240.9 547.5,242.2 548.0,243.6 548.5,244.8 549.0,246.0 549.5,247.2 550.0,248.3 550.5,249.4 551.0,250.5 551.5,251.5 552.0,252.4 552.5,253.3 553.0,254.2 553.5,255.0 554.0,255.8 554.5,256.6 555.0,257.3 555.5,258.0 556.0,258.6 556.5,259.2 557.0,259.8 557.5,260.3 558.0,260.8 558.5,261.3 559.0,261.7 559.5,262.1 560.0,262.5 560.5,262.8 561.0,263.1 561.5,263.4 562.0,263.6 562.5,263.8 563.0,264.0 563.5,264.1 564.0,264.3 564.5,264.4 565.0,264.4 565.5,264.5 566.0,264.5 566.5,264.5 567.0,264.5 567.5,264.4 568.0,264.4 568.5,264.3 569.0,264.2 569.5,264.1 570.0,263.9 570.5,263.8 571.0,263.6 571.5,263.4 572.0,263.2 572.5,263.0 573.0,262.7 573.5,262.5 574.0,262.2 574.5,262.0 575.0,261.7 575.5,261.4 576.0,261.1 576.5,260.8 577.0,260.5 577.5,260.2 578.0,259.9 578.5,259.5 579.0,259.2 579.5,258.9 580.0,258.5 580.5,258.2 581.0,257.8 581.5,257.5 582.0,257.1 582.5,256.8 583.0,256.4 583.5,256.1 584.0,255.7 584.5,255.4 585.0,255.1 585.5,254.7 586.0,254.4 586.5,254.1 587.0,253.7 587.5,253.4 588.0,253.1 588.5,252.8 589.0,252.5 589.5,252.2 590.0,251.9 590.5,251.6 591.0,251.3 591.5,251.1 592.0,250.8 592.5,250.6 593.0,250.3 593.5,250.1 594.0,249.9 594.5,249.6 595.0,249.4 595.5,249.2 596.0,249.1 596.5,248.9 597.0,248.7 597.5,248.6 598.0,248.4 598.5,248.3 599.0,248.2 599.5,248.0 600.0,247.9 600.5,247.8 601.0,247.8 601.5,247.7 602.0,247.6 602.5,247.6 603.0,247.6 603.5,247.5 604.0,247.5 604.5,247.5 605.0,247.5 605.5,247.5 606.0,247.6 606.5,247.6 607.0,247.6 607.5,247.7 608.0,247.8 608.5,247.9 609.0,247.9 609.5,248.0 610.0,248.1 610.5,248.3 611.0,248.4 611.5,248.5 612.0,248.7 612.5,248.8 613.0,249.0 613.5,249.1 614.0,249.3 614.5,249.5 615.0,249.7 615.5,249.9 616.0,250.1 616.5,250.3 617.0,250.5 617.5,250.7 618.0,250.9 618.5,251.1 619.0,251.4 619.5,251.6 620.0,251.9 620.5,252.1 621.0,252.3 621.5,252.6 622.0,252.9 622.5,253.1 623.0,253.4 623.5,253.6 624.0,253.9 624.5,254.2 625.0,254.4 625.5,254.7 626.0,255.0 626.5,255.2 627.0,255.5 627.5,255.8 628.0,256.0 628.5,256.3 629.0,256.6 629.5,256.8 630.0,257.1 630.5,257.4 631.0,257.6 631.5,257.9 632.0,258.1 632.5,258.4 633.0,258.6 633.5,258.9 634.0,259.1 634.5,259.4 635.0,259.6 635.5,259.8 636.0,260.1 636.5,260.3 637.0,260.5 637.5,260.7 638.0,260.9 638.5,261.1 639.0,261.3 639.5,261.5 640.0,261.7 640.5,261.9 641.0,262.1 641.5,262.2 642.0,262.4 642.5,262.6 643.0,262.7 643.5,262.9 644.0,263.0 644.5,263.1 645.0,263.3 645.5,263.4 646.0,263.5 646.5,263.6 647.0,263.7 647.5,263.8 648.0,263.9 648.5,264.0 649.0,264.1 649.5,264.1 650.0,264.2 650.5,264.3 651.0,264.3 651.5,264.4 652.0,264.4 652.5,264.4 653.0,264.5 653.5,264.5 654.0,264.5 654.5,264.5 655.0,264.5 655.5,264.5 656.0,264.5 656.5,264.5 657.0,264.5 657.5,264.4 658.0,264.4 658.5,264.4 659.0,264.3 659.5,264.3 660.0,264.2 660.5,264.2 661.0,264.1 661.5,264.1 662.0,264.0 662.5,263.9 663.0,263.8 663.5,263.8 664.0,263.7 664.5,263.6 665.0,263.5 665.5,263.4 666.0,263.3 666.5,263.2 667.0,263.1 667.5,263.0 668.0,262.9 668.5,262.8 669.0,262.7 669.5,262.6 670.0,262.5 670.5,262.4 671.0,262.3 671.5,262.2 672.0,262.1 672.5,262.0 673.0,261.8 673.5,261.7 674.0,261.6 674.5,261.5 675.0,261.4 675.5,261.3 676.0,261.2 676.5,261.0 677.0,260.9 677.5,260.8 678.0,260.7 678.5,260.6 679.0,260.5 679.5,260.4 680.0,260.3 680.5,260.2 681.0,260.1 681.5,260.0 682.0,259.9 682.5,259.8 683.0,259.7 683.5,259.7 684.0,259.6 684.5,259.5 685.0,259.4 685.5,259.3 686.0,259.3 686.5,259.2 687.0,259.1 687.5,259.1 688.0,259.0 688.5,259.0 689.0,258.9 689.5,258.9 690.0,258.8 690.5,258.8 691.0,258.7 691.5,258.7 692.0,258.7 692.5,258.6 693.0,258.6 693.5,258.6 694.0,258.6 694.5,258.6 695.0,258.6 695.5,258.6 696.0,258.6 696.5,258.6 697.0,258.6 697.5,258.6 698.0,258.6 698.5,258.6 699.0,258.6 699.5,258.7 700.0,258.7 700.5,258.7 701.0,258.8 701.5,258.8 702.0,258.8 702.5,258.9 703.0,258.9 703.5,259.0 704.0,259.0 704.5,259.1 705.0,259.2 705.5,259.2 706.0,259.3 706.5,259.4 707.0,259.4 707.5,259.5 708.0,259.6 708.5,259.7 709.0,259.7 709.5,259.8 710.0,259.9 710.5,260.0 711.0,260.1 711.5,260.2 712.0,260.3 712.5,260.3 713.0,260.4 713.5,260.5 714.0,260.6 714.5,260.7 715.0,260.8 715.5,260.9 716.0,261.0 716.5,261.1 717.0,261.2 717.5,261.3 718.0,261.4 718.5,261.5 719.0,261.6 719.5,261.7 720.0,261.8 720.5,261.9 721.0,262.0 721.5,262.1 722.0,262.2 722.5,262.3 723.0,262.4 723.5,262.5 724.0,262.5 724.5,262.6 725.0,262.7 725.5,262.8 726.0,262.9 726.5,263.0 727.0,263.1 727.5,263.1 728.0,263.2 728.5,263.3 729.0,263.4 729.5,263.4 730.0,263.5 730.5,263.6 731.0,263.6 731.5,263.7 732.0,263.8 732.5,263.8 733.0,263.9 733.5,263.9 734.0,264.0 734.5,264.1 735.0,264.1 735.5,264.1 736.0,264.2 736.5,264.2 737.0,264.3 737.5,264.3 738.0,264.3 738.5,264.4 739.0,264.4 739.5,264.4 740.0,264.4 740.5,264.4 741.0,264.5 741.5,264.5 742.0,264.5 742.5,264.5 743.0,264.5 743.5,264.5 744.0,264.5 744.5,264.5 745.0,264.5 745.5,264.5 746.0,264.5 746.5,264.5 747.0,264.4 747.5,264.4 748.0,264.4 748.5,264.4 749.0,264.4 749.5,264.3 750.0,264.3 750.5,264.3 751.0,264.3 751.5,264.2 752.0,264.2 752.5,264.1 753.0,264.1 753.5,264.1 754.0,264.0 754.5,264.0 755.0,263.9 755.5,263.9 756.0,263.8 756.5,263.8 757.0,263.7 757.5,263.7 758.0,263.6 758.5,263.6 759.0,263.5 759.5,263.5 760.0,263.4"/>
 <polyline points="886,260.5 1045,260.5 1151.5,-120 1259.3,260.5 1348,260.5"/>
 <polyline points="132.0,512.2 132.5,507.2 133.0,502.1 133.5,497.1 134.0,492.1 134.5,487.2 135.0,482.4 135.5,477.7 136.0,473.1 136.5,468.7 137.0,464.4 137.5,460.3 138.0,456.4 138.5,452.7 139.0,449.3 139.5,446.0 140.0,443.0 140.5,440.3 141.0,437.8 141.5,435.6 142.0,433.7 142.5,432.1 143.0,430.8 143.5,429.7 144.0,429.0 144.5,428.6 145.0,428.5 145.5,428.7 146.0,429.2 146.5,430.0 147.0,431.2 147.5,432.6 148.0,434.3 148.5,436.3 149.0,438.6 149.5,441.2 150.0,444.0 150.5,447.0 151.0,450.4 151.5,453.9 152.0,457.7 152.5,461.6 153.0,465.8 153.5,470.1 154.0,474.6 154.5,479.2 155.0,483.9 155.5,488.7 156.0,493.7 156.5,498.7 157.0,503.7 157.5,508.8 158.0,513.9 158.5,519.0 159.0,524.0 159.5,529.0 160.0,534.0 160.5,538.9 161.0,543.6 161.5,548.3 162.0,552.8 162.5,557.2 163.0,561.4 163.5,565.4 164.0,569.3 164.5,572.9 165.0,576.3 165.5,579.5 166.0,582.4 166.5,585.0 167.0,587.4 167.5,589.5 168.0,591.3 168.5,592.9 169.0,594.1 169.5,595.0 170.0,595.6 170.5,596.0 171.0,596.0 171.5,595.7 172.0,595.1 172.5,594.1 173.0,592.9 173.5,591.4 174.0,589.6 174.5,587.5 175.0,585.1 175.5,582.5 176.0,579.6 176.5,576.4 177.0,573.0 177.5,569.4 178.0,565.6 178.5,561.6 179.0,557.4 179.5,553.0 180.0,548.5 180.5,543.8 181.0,539.1 181.5,534.2 182.0,529.2 182.5,524.2 183.0,519.2 183.5,514.1 184.0,509.0 184.5,503.9 185.0,498.9 185.5,493.9 186.0,488.9 186.5,484.1 187.0,479.4 187.5,474.7 188.0,470.3 188.5,465.9 189.0,461.8 189.5,457.8 190.0,454.0 190.5,450.5 191.0,447.2 191.5,444.1 192.0,441.3 192.5,438.7 193.0,436.4 193.5,434.4 194.0,432.6 194.5,431.2 195.0,430.1 195.5,429.2 196.0,428.7 196.5,428.5 197.0,428.6 197.5,429.0 198.0,429.7 198.5,430.7 199.0,432.0 199.5,433.7 200.0,435.6 200.5,437.7 201.0,440.2 201.5,442.9 202.0,445.9 202.5,449.1 203.0,452.6 203.5,456.3 204.0,460.2 204.5,464.3 205.0,468.5 205.5,472.9 206.0,477.5 206.5,482.2 207.0,487.0 207.5,491.9 208.0,496.9 208.5,501.9 209.0,507.0 209.5,512.0 210.0,517.1 210.5,522.2 211.0,527.2 211.5,532.2 212.0,537.1 212.5,541.9 213.0,546.6 213.5,551.2 214.0,555.6 214.5,559.9 215.0,564.0 215.5,567.9 216.0,571.6 216.5,575.1 217.0,578.3 217.5,581.3 218.0,584.1 218.5,586.6 219.0,588.8 219.5,590.7 220.0,592.3 220.5,593.7 221.0,594.7 221.5,595.5 222.0,595.9 222.5,596.0 223.0,595.8 223.5,595.3 224.0,594.5 224.5,593.4 225.0,592.0 225.5,590.3 226.0,588.3 226.5,586.0 227.0,583.5 227.5,580.6 228.0,577.6 228.5,574.3 229.0,570.7 229.5,567.0 230.0,563.0 230.5,558.9 231.0,554.6 231.5,550.1 232.0,545.5 232.5,540.8 233.0,536.0 233.5,531.0 234.0,526.0 234.5,521.0 235.0,515.9 235.5,510.8 236.0,505.7 236.5,500.7 237.0,495.7 237.5,490.7 238.0,485.8 238.5,481.0 239.0,476.4 239.5,471.9 240.0,467.5 240.5,463.3 241.0,459.2 241.5,455.4 242.0,451.7 242.5,448.3 243.0,445.2 243.5,442.2 244.0,439.6 244.5,437.2 245.0,435.1 245.5,433.2 246.0,431.7 246.5,430.5 247.0,429.5 247.5,428.9 248.0,428.5 248.5,428.5 249.0,428.8 249.5,429.4 250.0,430.3 250.5,431.5 251.0,433.0 251.5,434.8 252.0,436.9 252.5,439.3 253.0,441.9 253.5,444.8 254.0,447.9 254.5,451.3 255.0,454.9 255.5,458.7 256.0,462.8 256.5,467.0 257.0,471.3 257.5,475.8 258.0,480.5 258.5,485.2 259.0,490.1 259.5,495.1 260.0,500.1 260.5,505.1 261.0,510.2 261.5,515.3 262.0,520.4 262.5,525.4 263.0,530.4 263.5,535.4 264.0,540.2 264.5,545.0 265.0,549.6 265.5,554.1 266.0,558.4 266.5,562.6 267.0,566.5 267.5,570.3 268.0,573.9 268.5,577.2 269.0,580.3 269.5,583.1 270.0,585.7 270.5,588.0 271.0,590.0 271.5,591.8 272.0,593.2 272.5,594.4 273.0,595.2 273.5,595.8 274.0,596.0 274.5,595.9 275.0,595.5 275.5,594.8 276.0,593.8 276.5,592.5 277.0,590.9 277.5,589.0 278.0,586.9 278.5,584.4 279.0,581.7 279.5,578.7 280.0,575.5 280.5,572.0 281.0,568.4 281.5,564.5 282.0,560.4 282.5,556.2 283.0,551.8 283.5,547.2 284.0,542.5 284.5,537.7 285.0,532.8 285.5,527.8 286.0,522.8 286.5,517.7 287.0,512.7 287.5,507.6 288.0,502.5 288.5,497.5 289.0,492.5 289.5,487.6 290.0,482.8 290.5,478.0 291.0,473.5 291.5,469.0 292.0,464.8 292.5,460.6 293.0,456.7 293.5,453.0 294.0,449.5 294.5,446.3 295.0,443.3 295.5,440.5 296.0,438.0 296.5,435.8 297.0,433.9 297.5,432.2 298.0,430.9 298.5,429.8 299.0,429.1 299.5,428.6 300.0,428.5 300.5,428.7 301.0,429.2 301.5,430.0 302.0,431.1 302.5,432.5 303.0,434.2 303.5,436.1 304.0,438.4 304.5,440.9 305.0,443.7 305.5,446.8 306.0,450.1 306.5,453.6 307.0,457.3 307.5,461.3 308.0,465.4 308.5,469.7 309.0,474.2 309.5,478.8 310.0,483.5 310.5,488.4 311.0,493.3 311.5,498.3 312.0,503.3 312.5,508.4 313.0,513.5 313.5,518.6 314.0,523.6 314.5,528.6 315.0,533.6 315.5,538.5 316.0,543.3 316.5,547.9 317.0,552.5 317.5,556.9 318.0,561.1 318.5,565.1 319.0,569.0 319.5,572.6 320.0,576.0 320.5,579.2 321.0,582.1 321.5,584.8 322.0,587.2 322.5,589.3 323.0,591.2 323.5,592.7 324.0,594.0 324.5,595.0 325.0,595.6 325.5,595.9 326.0,596.0 326.5,595.7 327.0,595.1 327.5,594.2 328.0,593.0 328.5,591.5 329.0,589.7 329.5,587.7 330.0,585.3 330.5,582.7 331.0,579.8 331.5,576.7 332.0,573.3 332.5,569.7 333.0,565.9 333.5,561.9 334.0,557.7 334.5,553.4 335.0,548.8 335.5,544.2 336.0,539.4 336.5,534.6 337.0,529.6 337.5,524.6 338.0,519.6 338.5,514.5 339.0,509.4 339.5,504.3 340.0,499.3 340.5,494.3 341.0,489.3 341.5,484.5 342.0,479.7 342.5,475.1 343.0,470.6 343.5,466.3 344.0,462.1 344.5,458.1 345.0,454.3 345.5,450.8 346.0,447.4 346.5,444.3 347.0,441.5 347.5,438.9 348.0,436.6 348.5,434.5 349.0,432.8 349.5,431.3 350.0,430.2 350.5,429.3 351.0,428.8 351.5,428.5 352.0,428.6 352.5,429.0 353.0,429.6 353.5,430.6 354.0,431.9 354.5,433.5 355.0,435.4 355.5,437.6 356.0,440.0 356.5,442.7 357.0,445.7 357.5,448.9 358.0,452.3 358.5,456.0 359.0,459.9 359.5,463.9 360.0,468.2 360.5,472.6 361.0,477.1 361.5,481.8 362.0,486.6 362.5,491.5 363.0,496.5 363.5,501.5 364.0,506.6 364.5,511.6 365.0,516.7 365.5,521.8 366.0,526.8 366.5,531.8 367.0,536.7 367.5,541.6 368.0,546.3 368.5,550.9 369.0,555.3 369.5,559.6 370.0,563.7 370.5,567.6 371.0,571.3 371.5,574.8 372.0,578.1 372.5,581.1 373.0,583.9 373.5,586.4 374.0,588.6 374.5,590.6 375.0,592.2 375.5,593.6 376.0,594.6 376.5,595.4 377.0,595.9 377.5,596.0 378.0,595.8 378.5,595.4 379.0,594.6 379.5,593.5 380.0,592.1 380.5,590.4 381.0,588.4 381.5,586.2 382.0,583.7 382.5,580.9 383.0,577.8 383.5,574.6 384.0,571.0 384.5,567.3 385.0,563.4 385.5,559.2 386.0,554.9 386.5,550.5 387.0,545.9 387.5,541.2 388.0,536.3 388.5,531.4 389.0,526.4 389.5,521.4 390.0,516.3 390.5,511.2 391.0,506.1 391.5,501.1 392.0,496.1 392.5,491.1 393.0,486.2 393.5,481.4 394.0,476.8 394.5,472.2 395.0,467.8 395.5,463.6 396.0,459.5 396.5,455.7 397.0,452.0 397.5,448.6 398.0,445.4 398.5,442.5 399.0,439.8 399.5,437.4 400.0,435.2 400.5,433.4 401.0,431.8 401.5,430.5 402.0,429.6 402.5,428.9 403.0,428.6 403.5,428.5 404.0,428.8 404.5,429.4 405.0,430.2 405.5,431.4 406.0,432.9 406.5,434.7 407.0,436.7 407.5,439.1 408.0,441.7 408.5,444.6 409.0,447.7 409.5,451.0 410.0,454.6 410.5,458.4 411.0,462.4 411.5,466.6 412.0,471.0 412.5,475.5 413.0,480.1 413.5,484.9 414.0,489.7 414.5,494.7 415.0,499.7 415.5,504.7 416.0,509.8 416.5,514.9 417.0,520.0 417.5,525.0 418.0,530.0 418.5,535.0 419.0,539.8 419.5,544.6 420.0,549.2 420.5,553.7 421.0,558.1 421.5,562.2 422.0,566.2 422.5,570.0 423.0,573.6 423.5,576.9 424.0,580.1 424.5,582.9 425.0,585.5 425.5,587.8 426.0,589.9 426.5,591.7 427.0,593.1 427.5,594.3 428.0,595.2 428.5,595.7 429.0,596.0 429.5,595.9 430.0,595.6 430.5,594.9 431.0,593.9 431.5,592.6 432.0,591.1 432.5,589.2 433.0,587.0 433.5,584.6 434.0,581.9 434.5,579.0 435.0,575.8 435.5,572.3 436.0,568.7 436.5,564.8 437.0,560.7 437.5,556.5 438.0,552.1 438.5,547.6 439.0,542.9 439.5,538.1 440.0,533.2 440.5,528.2 441.0,523.2 441.5,518.2 442.0,513.1 442.5,508.0 443.0,502.9 443.5,497.9 444.0,492.9 444.5,488.0 445.0,483.1 445.5,478.4 446.0,473.8 446.5,469.4 447.0,465.1 447.5,461.0 448.0,457.0 448.5,453.3 449.0,449.8 449.5,446.5 450.0,443.5 450.5,440.7 451.0,438.2 451.5,436.0 452.0,434.0 452.5,432.3 453.0,431.0 453.5,429.9 454.0,429.1 454.5,428.7 455.0,428.5 455.5,428.7 456.0,429.1 456.5,429.9 457.0,431.0 457.5,432.3 458.0,434.0 458.5,436.0 459.0,438.2 459.5,440.7 460.0,443.5 460.5,446.5 461.0,449.8 461.5,453.3 462.0,457.0 462.5,461.0 463.0,465.1 463.5,469.4 464.0,473.8 464.5,478.4 465.0,483.1 465.5,488.0 466.0,492.9 466.5,497.9 467.0,502.9 467.5,508.0 468.0,513.1 468.5,518.2 469.0,523.2 469.5,528.2 470.0,533.2 470.5,538.1 471.0,542.9 471.5,547.6 472.0,552.1 472.5,556.5 473.0,560.7 473.5,564.8 474.0,568.7 474.5,572.3 475.0,575.8 475.5,579.0 476.0,581.9 476.5,584.6 477.0,587.0 477.5,589.2 478.0,591.1 478.5,592.6 479.0,593.9 479.5,594.9 480.0,595.6 480.5,595.9 481.0,596.0 481.5,595.7 482.0,595.2 482.5,594.3 483.0,593.1 483.5,591.7 484.0,589.9 484.5,587.8 485.0,585.5 485.5,582.9 486.0,580.1 486.5,576.9 487.0,573.6 487.5,570.0 488.0,566.2 488.5,562.2 489.0,558.1 489.5,553.7 490.0,549.2 490.5,544.6 491.0,539.8 491.5,535.0 492.0,530.0 492.5,525.0 493.0,520.0 493.5,514.9 494.0,509.8 494.5,504.7 495.0,499.7 495.5,494.7 496.0,489.7 496.5,484.9 497.0,480.1 497.5,475.5 498.0,471.0 498.5,466.6 499.0,462.4 499.5,458.4 500.0,454.6 500.5,451.0 501.0,447.7 501.5,444.6 502.0,441.7 502.5,439.1 503.0,436.7 503.5,434.7 504.0,432.9 504.5,431.4 505.0,430.2 505.5,429.4 506.0,428.8 506.5,428.5 507.0,428.6 507.5,428.9 508.0,429.6 508.5,430.5 509.0,431.8 509.5,433.4 510.0,435.2 510.5,437.4 511.0,439.8 511.5,442.5 512.0,445.4 512.5,448.6 513.0,452.0 513.5,455.7 514.0,459.5 514.5,463.6 515.0,467.8 515.5,472.2 516.0,476.8 516.5,481.4 517.0,486.2 517.5,491.1 518.0,496.1 518.5,501.1 519.0,506.1 519.5,511.2 520.0,516.3 520.5,521.4 521.0,526.4 521.5,531.4 522.0,536.3 522.5,541.2 523.0,545.9 523.5,550.5 524.0,554.9 524.5,559.2 525.0,563.4 525.5,567.3 526.0,571.0 526.5,574.6 527.0,577.8 527.5,580.9 528.0,583.7 528.5,586.2 529.0,588.4 529.5,590.4 530.0,592.1 530.5,593.5 531.0,594.6 531.5,595.4 532.0,595.8 532.5,596.0 533.0,595.9 533.5,595.4 534.0,594.6 534.5,593.6 535.0,592.2 535.5,590.6 536.0,588.6 536.5,586.4 537.0,583.9 537.5,581.1 538.0,578.1 538.5,574.8 539.0,571.3 539.5,567.6 540.0,563.7 540.5,559.6 541.0,555.3 541.5,550.9 542.0,546.3 542.5,541.6 543.0,536.7 543.5,531.8 544.0,526.8 544.5,521.8 545.0,516.7"/>
 <polyline points="660.0,436.5 660.5,436.6 661.0,437.0 661.5,437.7 662.0,438.7 662.5,439.9 663.0,441.4 663.5,443.1 664.0,445.1 664.5,447.3 665.0,449.8 665.5,452.5 666.0,455.4 666.5,458.6 667.0,461.9 667.5,465.4 668.0,469.1 668.5,472.9 669.0,476.9 669.5,481.1 670.0,485.3 670.5,489.7 671.0,494.1 671.5,498.7 672.0,503.3 672.5,507.9 673.0,512.6 673.5,517.2 674.0,521.9 674.5,526.6 675.0,531.2 675.5,535.8 676.0,540.3 676.5,544.7 677.0,549.1 677.5,553.3 678.0,557.4 678.5,561.3 679.0,565.1 679.5,568.7 680.0,572.2 680.5,575.5 681.0,578.5 681.5,581.4 682.0,584.0 682.5,586.4 683.0,588.6 683.5,590.5 684.0,592.1 684.5,593.5 685.0,594.7 685.5,595.5 686.0,596.1 686.5,596.4 687.0,596.5 687.5,596.3 688.0,595.8 688.5,595.0 689.0,594.0 689.5,592.7 690.0,591.1 690.5,589.3 691.0,587.2 691.5,584.9 692.0,582.3 692.5,579.6 693.0,576.6 693.5,573.4 694.0,570.0 694.5,566.4 695.0,562.7 695.5,558.8 696.0,554.8 696.5,550.6 697.0,546.3 697.5,541.9 698.0,537.4 698.5,532.9 699.0,528.3 699.5,523.6 700.0,518.9 700.5,514.3 701.0,509.6 701.5,504.9 702.0,500.3 702.5,495.8 703.0,491.3 703.5,486.9 704.0,482.6 704.5,478.4 705.0,474.4 705.5,470.5 706.0,466.7 706.5,463.1 707.0,459.7 707.5,456.5 708.0,453.5 708.5,450.8 709.0,448.2 709.5,445.9 710.0,443.8 710.5,442.0 711.0,440.4 711.5,439.1 712.0,438.0 712.5,437.3 713.0,436.8 713.5,436.5 714.0,436.6 714.5,436.9 715.0,437.5 715.5,438.3 716.0,439.4 716.5,440.8 717.0,442.5 717.5,444.4 718.0,446.5 718.5,448.9 719.0,451.5 719.5,454.4 720.0,457.4 720.5,460.7 721.0,464.1 721.5,467.7 722.0,471.5 722.5,475.5 723.0,479.6 723.5,483.8 724.0,488.1 724.5,492.5 725.0,497.0 725.5,501.6 726.0,506.2 726.5,510.9 727.0,515.6 727.5,520.2 728.0,524.9 728.5,529.6 729.0,534.1 729.5,538.7 730.0,543.1 730.5,547.5 731.0,551.8 731.5,555.9 732.0,559.9 732.5,563.8 733.0,567.5 733.5,571.0 734.0,574.3 734.5,577.4 735.0,580.4 735.5,583.1 736.0,585.6 736.5,587.8 737.0,589.8 737.5,591.6 738.0,593.0 738.5,594.3 739.0,595.2 739.5,595.9 740.0,596.4 740.5,596.5 741.0,596.4 741.5,596.0 742.0,595.3 742.5,594.4 743.0,593.2 743.5,591.7 744.0,590.0 744.5,588.0 745.0,585.8 745.5,583.3 746.0,580.6 746.5,577.7 747.0,574.6 747.5,571.3 748.0,567.7 748.5,564.1 749.0,560.2 749.5,556.2 750.0,552.1 750.5,547.8 751.0,543.5 751.5,539.0 752.0,534.5 752.5,529.9 753.0,525.3 753.5,520.6 754.0,515.9 754.5,511.3 755.0,506.6 755.5,502.0 756.0,497.4 756.5,492.9 757.0,488.5 757.5,484.1 758.0,479.9 758.5,475.8 759.0,471.8 759.5,468.0 760.0,464.4 760.5,460.9 761.0,457.7 761.5,454.6 762.0,451.7 762.5,449.1 763.0,446.7 763.5,444.5 764.0,442.6 764.5,440.9 765.0,439.5 765.5,438.4 766.0,437.5 766.5,436.9 767.0,436.6 767.5,436.5 768.0,436.7 768.5,437.2 769.0,438.0 769.5,439.0 770.0,440.3 770.5,441.8 771.0,443.7 771.5,445.7 772.0,448.0 772.5,450.5 773.0,453.3 773.5,456.3 774.0,459.5 774.5,462.8 775.0,466.4 775.5,470.1 776.0,474.0 776.5,478.1 777.0,482.2 777.5,486.5 778.0,490.9 778.5,495.4 779.0,500.0 779.5,504.6 780.0,509.2 780.5,513.9 781.0,518.6 781.5,523.2 782.0,527.9 782.5,532.5 783.0,537.1 783.5,541.5 784.0,545.9 784.5,550.2 785.0,554.4 785.5,558.5 786.0,562.4 786.5,566.1 787.0,569.7 787.5,573.1 788.0,576.3 788.5,579.3 789.0,582.1 789.5,584.7 790.0,587.0 790.5,589.1 791.0,591.0 791.5,592.5 792.0,593.9 792.5,594.9 793.0,595.7 793.5,596.2 794.0,596.5 794.5,596.5 795.0,596.1 795.5,595.6 796.0,594.7 796.5,593.6 797.0,592.2 797.5,590.6 798.0,588.7 798.5,586.6 799.0,584.2 799.5,581.6 800.0,578.8 800.5,575.7 801.0,572.5 801.5,569.0 802.0,565.4 802.5,561.6 803.0,557.7 803.5,553.6 804.0,549.4 804.5,545.1 805.0,540.7 805.5,536.1 806.0,531.6 806.5,527.0 807.0,522.3 807.5,517.6 808.0,512.9 808.5,508.3 809.0,503.6 809.5,499.0 810.0,494.5 810.5,490.0 811.0,485.7 811.5,481.4 812.0,477.3 812.5,473.2 813.0,469.4 813.5,465.7 814.0,462.2 814.5,458.8 815.0,455.7 815.5,452.7 816.0,450.0 816.5,447.5 817.0,445.3 817.5,443.3 818.0,441.5 818.5,440.0 819.0,438.8 819.5,437.8 820.0,437.1 820.5,436.7 821.0,436.5 821.5,436.6 822.0,437.0 822.5,437.7 823.0,438.6 823.5,439.8 824.0,441.3 824.5,443.0 825.0,444.9 825.5,447.2 826.0,449.6 826.5,452.3 827.0,455.2 827.5,458.3 828.0,461.6 828.5,465.1 829.0,468.8 829.5,472.6 830.0,476.6 830.5,480.7 831.0,485.0 831.5,489.3 832.0,493.8 832.5,498.3 833.0,502.9 833.5,507.5 834.0,512.2 834.5,516.9 835.0,521.6 835.5,526.2 836.0,530.8 836.5,535.4 837.0,539.9 837.5,544.4 838.0,548.7 838.5,552.9 839.0,557.0 839.5,561.0 840.0,564.8 840.5,568.5 841.0,571.9 841.5,575.2 842.0,578.3 842.5,581.2 843.0,583.8 843.5,586.2 844.0,588.4 844.5,590.3 845.0,592.0 845.5,593.4 846.0,594.6 846.5,595.5 847.0,596.1 847.5,596.4 848.0,596.5 848.5,596.3 849.0,595.8 849.5,595.1 850.0,594.0 850.5,592.8 851.0,591.2 851.5,589.4 852.0,587.4 852.5,585.1 853.0,582.6 853.5,579.8 854.0,576.8 854.5,573.7 855.0,570.3 855.5,566.7 856.0,563.0 856.5,559.1 857.0,555.1 857.5,550.9 858.0,546.6 858.5,542.3 859.0,537.8 859.5,533.2 860.0,528.6 860.5,524.0 861.0,519.3 861.5,514.6 862.0,510.0 862.5,505.3 863.0,500.7 863.5,496.1 864.0,491.6 864.5,487.2 865.0,482.9 865.5,478.7 866.0,474.7 866.5,470.8 867.0,467.0 867.5,463.4 868.0,460.0 868.5,456.8 869.0,453.8 869.5,451.0 870.0,448.4 870.5,446.1 871.0,444.0 871.5,442.1 872.0,440.5 872.5,439.2 873.0,438.1 873.5,437.3 874.0,436.8 874.5,436.5 875.0,436.5 875.5,436.8 876.0,437.4 876.5,438.2 877.0,439.3 877.5,440.7 878.0,442.3 878.5,444.2 879.0,446.3 879.5,448.7 880.0,451.3 880.5,454.1 881.0,457.2 881.5,460.4 882.0,463.8 882.5,467.4 883.0,471.2 883.5,475.2 884.0,479.2 884.5,483.4 885.0,487.8 885.5,492.2 886.0,496.7 886.5,501.2 887.0,505.9 887.5,510.5 888.0,515.2 888.5,519.9 889.0,524.5 889.5,529.2 890.0,533.8 890.5,538.3 891.0,542.8 891.5,547.2 892.0,551.4 892.5,555.6 893.0,559.6 893.5,563.5 894.0,567.2 894.5,570.7 895.0,574.1 895.5,577.2 896.0,580.1 896.5,582.9 897.0,585.4 897.5,587.6 898.0,589.7 898.5,591.4 899.0,592.9 899.5,594.2 900.0,595.2 900.5,595.9 901.0,596.3 901.5,596.5 902.0,596.4 902.5,596.0 903.0,595.4 903.5,594.4 904.0,593.3 904.5,591.8 905.0,590.1 905.5,588.1 906.0,585.9 906.5,583.5 907.0,580.8 907.5,577.9 908.0,574.8 908.5,571.5 909.0,568.0 909.5,564.4 910.0,560.5 910.5,556.6 911.0,552.4 911.5,548.2 912.0,543.8 912.5,539.4 913.0,534.9 913.5,530.3 914.0,525.7 914.5,521.0 915.0,516.3 915.5,511.6 916.0,507.0 916.5,502.3 917.0,497.8 917.5,493.2 918.0,488.8 918.5,484.5 919.0,480.2 919.5,476.1 920.0,472.2 920.5,468.3 921.0,464.7 921.5,461.2 922.0,457.9 922.5,454.8 923.0,452.0 923.5,449.3 924.0,446.9 924.5,444.7 925.0,442.8 925.5,441.1 926.0,439.6 926.5,438.5 927.0,437.6 927.5,436.9 928.0,436.6 928.5,436.5 929.0,436.7 929.5,437.2 930.0,437.9 930.5,438.9 931.0,440.2 931.5,441.7 932.0,443.5 932.5,445.5 933.0,447.8 933.5,450.3 934.0,453.1 934.5,456.0 935.0,459.2 935.5,462.6 936.0,466.1 936.5,469.8 937.0,473.7 937.5,477.7 938.0,481.9 938.5,486.2 939.0,490.6 939.5,495.0 940.0,499.6 940.5,504.2 941.0,508.8 941.5,513.5 942.0,518.2 942.5,522.9 943.0,527.5 943.5,532.1 944.0,536.7 944.5,541.2 945.0,545.6 945.5,549.9 946.0,554.1 946.5,558.2 947.0,562.1 947.5,565.9 948.0,569.5 948.5,572.9 949.0,576.1 949.5,579.1 950.0,581.9 950.5,584.5 951.0,586.8 951.5,589.0 952.0,590.8 952.5,592.4 953.0,593.8 953.5,594.8 954.0,595.7 954.5,596.2 955.0,596.5 955.5,596.5 956.0,596.2 956.5,595.6 957.0,594.8 957.5,593.7 958.0,592.4 958.5,590.7 959.0,588.9 959.5,586.8 960.0,584.4 960.5,581.8 961.0,579.0 961.5,576.0 962.0,572.7 962.5,569.3 963.0,565.7 963.5,561.9 964.0,558.0 964.5,553.9 965.0,549.7 965.5,545.4 966.0,541.0 966.5,536.5 967.0,531.9 967.5,527.3 968.0,522.7 968.5,518.0 969.0,513.3 969.5,508.6 970.0,504.0 970.5,499.4 971.0,494.9 971.5,490.4 972.0,486.0 972.5,481.7 973.0,477.6 973.5,473.6 974.0,469.7 974.5,466.0 975.0,462.4 975.5,459.1 976.0,455.9 976.5,453.0 977.0,450.2 977.5,447.7 978.0,445.5 978.5,443.4 979.0,441.6 979.5,440.1 980.0,438.9 980.5,437.9 981.0,437.1 981.5,436.7 982.0,436.5 982.5,436.6 983.0,437.0 983.5,437.6 984.0,438.5 984.5,439.7 985.0,441.1 985.5,442.8 986.0,444.8 986.5,447.0 987.0,449.4 987.5,452.1 988.0,454.9 988.5,458.0 989.0,461.3 989.5,464.8 990.0,468.5 990.5,472.3 991.0,476.3 991.5,480.4 992.0,484.6 992.5,489.0 993.0,493.4 993.5,497.9 994.0,502.5 994.5,507.2 995.0,511.8 995.5,516.5 996.0,521.2 996.5,525.8 997.0,530.5 997.5,535.1 998.0,539.6 998.5,544.0 999.0,548.4 999.5,552.6 1000.0,556.7 1000.5,560.7 1001.0,564.5 1001.5,568.2 1002.0,571.7 1002.5,575.0 1003.0,578.1 1003.5,580.9 1004.0,583.6 1004.5,586.0 1005.0,588.2 1005.5,590.2 1006.0,591.9 1006.5,593.3 1007.0,594.5 1007.5,595.4 1008.0,596.0 1008.5,596.4 1009.0,596.5 1009.5,596.3 1010.0,595.9 1010.5,595.1 1011.0,594.1 1011.5,592.9 1012.0,591.4 1012.5,589.6 1013.0,587.5 1013.5,585.3 1014.0,582.8 1014.5,580.0 1015.0,577.1 1015.5,573.9 1016.0,570.6 1016.5,567.0 1017.0,563.3 1017.5,559.4 1018.0,555.4 1018.5,551.3 1019.0,547.0 1019.5,542.6 1020.0,538.1 1020.5,533.6 1021.0,529.0 1021.5,524.4 1022.0,519.7 1022.5,515.0 1023.0,510.3 1023.5,505.7 1024.0,501.1 1024.5,496.5 1025.0,492.0 1025.5,487.6 1026.0,483.3 1026.5,479.1 1027.0,475.0 1027.5,471.1 1028.0,467.3 1028.5,463.7 1029.0,460.3 1029.5,457.0 1030.0,454.0 1030.5,451.2 1031.0,448.6 1031.5,446.2 1032.0,444.1 1032.5,442.3 1033.0,440.6 1033.5,439.3 1034.0,438.2 1034.5,437.4 1035.0,436.8 1035.5,436.5 1036.0,436.5 1036.5,436.8 1037.0,437.3 1037.5,438.2 1038.0,439.2 1038.5,440.6 1039.0,442.2 1039.5,444.0 1040.0,446.2 1040.5,448.5 1041.0,451.1 1041.5,453.9 1042.0,456.9 1042.5,460.1 1043.0,463.5 1043.5,467.1 1044.0,470.9 1044.5,474.8 1045.0,478.9 1045.5,483.1 1046.0,487.4 1046.5,491.8 1047.0,496.3 1047.5,500.9 1048.0,505.5 1048.5,510.1 1049.0,514.8 1049.5,519.5 1050.0,524.2 1050.5,528.8 1051.0,533.4 1051.5,538.0 1052.0,542.4 1052.5,546.8 1053.0,551.1 1053.5,555.3 1054.0,559.3 1054.5,563.2 1055.0,566.9 1055.5,570.4 1056.0,573.8 1056.5,577.0 1057.0,579.9 1057.5,582.7 1058.0,585.2 1058.5,587.5 1059.0,589.5 1059.5,591.3 1060.0,592.8 1060.5,594.1 1061.0,595.1 1061.5,595.8 1062.0,596.3 1062.5,596.5 1063.0,596.4 1063.5,596.1 1064.0,595.4 1064.5,594.5 1065.0,593.4 1065.5,591.9 1066.0,590.2 1066.5,588.3 1067.0,586.1 1067.5,583.7 1068.0,581.0 1068.5,578.2 1069.0,575.1 1069.5,571.8 1070.0,568.3 1070.5,564.7 1071.0,560.8 1071.5,556.9 1072.0,552.8 1072.5,548.5 1073.0,544.2 1073.5,539.8 1074.0,535.2 1074.5,530.7 1075.0,526.0 1075.5,521.4 1076.0,516.7 1076.5,512.0 1077.0,507.3 1077.5,502.7 1078.0,498.1 1078.5,493.6 1079.0,489.2 1079.5,484.8 1080.0,480.6 1080.5,476.4 1081.0,472.5 1081.5,468.6 1082.0,465.0 1082.5,461.5 1083.0,458.2 1083.5,455.1 1084.0,452.2 1084.5,449.5 1085.0,447.1 1085.5,444.9 1086.0,442.9 1086.5,441.2 1087.0,439.7 1087.5,438.6 1088.0,437.6 1088.5,437.0 1089.0,436.6"/>
 <line x1="78" y1="524.5" x2="103" y2="524.5"/>
 <line x1="606" y1="528.5" x2="631" y2="528.5"/>
</g>
<!-- ticks -->
<g shape-rendering="crispEdges" stroke="#000" stroke-width="1" fill="none">
 <path d="M251.5 258 V264 M364.5 258 V264 M477.5 258 V264 M590.5 258 V264 M703.5 258 V264"/>
 <path d="M938.5 254 V260 M1044.5 254 V260 M1151.5 254 V260 M1257.5 254 V260"/>
 <path d="M132 470.5 H138 M539 470.5 H545 M132 512.5 H138 M539 512.5 H545 M132 554.5 H138 M539 554.5 H545"/>
 <path d="M261.5 429 V435 M261.5 590 V596 M390.5 429 V435 M390.5 590 V596 M519.5 429 V435 M519.5 590 V596"/>
 <path d="M660 476.5 H666 M1083 476.5 H1089 M660 516.5 H666 M1083 516.5 H1089 M660 556.5 H666 M1083 556.5 H1089"/>
 <path d="M794.5 437 V443 M794.5 590 V596 M928.5 437 V443 M928.5 590 V596 M1062.5 437 V443 M1062.5 590 V596"/>
 <line x1="303" y1="339.5" x2="318" y2="339.5"/>
</g>
<path d="M66 347.5 l2 -3 l2 3 l2 -3 l2 3 l2 -3 l2 3 l2 -3" fill="none" stroke="#008000" stroke-width="1.1"/>
<path d="M154 347.5 l2 -3 l2 3 l2 -3 l2 3 l2 -3 l2 3 l2 -3 l2 3 l2 -3 l2 3" fill="none" stroke="#008000" stroke-width="1.1"/>
<g fill="#000">
<text x="187.55" y="269.6" font-size="13.5" textLength="6.90" lengthAdjust="spacingAndGlyphs">0</text>
<text x="233.35" y="287" font-size="13.5" textLength="35.50" lengthAdjust="spacingAndGlyphs">− 4×10</text>
<text x="268.75" y="280" font-size="10" textLength="5.80" lengthAdjust="spacingAndGlyphs">6</text>
<text x="346.15" y="287" font-size="13.5" textLength="36.20" lengthAdjust="spacingAndGlyphs">− 2×10</text>
<text x="381.55" y="280" font-size="10" textLength="6.20" lengthAdjust="spacingAndGlyphs">6</text>
<text x="476.35" y="287" font-size="13.5" textLength="7.10" lengthAdjust="spacingAndGlyphs">0</text>
<text x="577.15" y="287" font-size="13.5" textLength="26.30" lengthAdjust="spacingAndGlyphs">2×10</text>
<text x="602.95" y="280" font-size="10" textLength="5.50" lengthAdjust="spacingAndGlyphs">6</text>
<text x="690.15" y="287" font-size="13.5" textLength="26.70" lengthAdjust="spacingAndGlyphs">4×10</text>
<text x="715.95" y="280" font-size="10" textLength="5.50" lengthAdjust="spacingAndGlyphs">6</text>
<text x="877.15" y="265.7" font-size="13.5" textLength="7.40" lengthAdjust="spacingAndGlyphs">0</text>
<text x="916.65" y="283" font-size="13.5" textLength="35.10" lengthAdjust="spacingAndGlyphs">− 4×10</text>
<text x="951.55" y="276.2" font-size="10.5" textLength="12.70" lengthAdjust="spacingAndGlyphs">− 6</text>
<text x="1022.45" y="283" font-size="13.5" textLength="35.40" lengthAdjust="spacingAndGlyphs">− 2×10</text>
<text x="1057.55" y="276" font-size="10.5" textLength="12.90" lengthAdjust="spacingAndGlyphs">− 6</text>
<text x="1150.55" y="283" font-size="13.5" textLength="6.90" lengthAdjust="spacingAndGlyphs">0</text>
<text x="1241.55" y="283" font-size="13.5" textLength="25.20" lengthAdjust="spacingAndGlyphs">2×10</text>
<text x="1266.95" y="275.7" font-size="10.5" textLength="12.50" lengthAdjust="spacingAndGlyphs">− 6</text>
<text x="67.45" y="342.8" font-size="13.5" textLength="9.10" lengthAdjust="spacingAndGlyphs">T</text>
<text x="80.05" y="342.8" font-size="13.5" textLength="10.60" lengthAdjust="spacingAndGlyphs">:=</text>
<text x="94.35" y="342.8" font-size="13.5" textLength="22.90" lengthAdjust="spacingAndGlyphs">2·10</text>
<text x="116.55" y="334.9" font-size="13.5" textLength="16.80" lengthAdjust="spacingAndGlyphs">− 6</text>
<text x="155.55" y="343" font-size="13.5" textLength="13.90" lengthAdjust="spacingAndGlyphs">T1</text>
<text x="173.95" y="343" font-size="13.5" textLength="10.80" lengthAdjust="spacingAndGlyphs">:=</text>
<text x="188.45" y="343" font-size="13.5" textLength="22.60" lengthAdjust="spacingAndGlyphs">8·10</text>
<text x="210.85" y="334.5" font-size="13.5" textLength="16.60" lengthAdjust="spacingAndGlyphs">− 6</text>
<text x="259.75" y="342.8" font-size="13.5" textLength="15.60" lengthAdjust="spacingAndGlyphs">wc</text>
<text x="278.85" y="342.8" font-size="13.5" textLength="10.60" lengthAdjust="spacingAndGlyphs">:=</text>
<text x="293.55" y="342.8" font-size="13.5" textLength="6.70" lengthAdjust="spacingAndGlyphs">2</text>
<text x="305.75" y="334" font-size="13.5" textLength="7.90" lengthAdjust="spacingAndGlyphs">π</text>
<text x="303.45" y="354" font-size="13.5" textLength="15.00" lengthAdjust="spacingAndGlyphs">2T</text>
<text x="163.15" y="367" font-size="13.5" textLength="31.10" lengthAdjust="spacingAndGlyphs">f11(t)</text>
<text x="199.45" y="367" font-size="13.5" textLength="10.00" lengthAdjust="spacingAndGlyphs">:=</text>
<text x="214.25" y="367" font-size="13.5" textLength="48.10" lengthAdjust="spacingAndGlyphs">sin(wc·t)</text>
<text x="659.05" y="359.1" font-size="13.5" textLength="31.60" lengthAdjust="spacingAndGlyphs">f12(t)</text>
<text x="694.85" y="359.1" font-size="13.5" textLength="10.60" lengthAdjust="spacingAndGlyphs">:=</text>
<text x="709.75" y="359.1" font-size="13.5" textLength="51.70" lengthAdjust="spacingAndGlyphs">cos(wc·t)</text>
<text x="125.55" y="433.7" font-size="13.5" textLength="4.50" lengthAdjust="spacingAndGlyphs">1</text>
<text x="115.55" y="476" font-size="13.5" textLength="14.90" lengthAdjust="spacingAndGlyphs">0.5</text>
<text x="124.25" y="517" font-size="13.5" textLength="6.20" lengthAdjust="spacingAndGlyphs">0</text>
<text x="105.55" y="560" font-size="13.5" textLength="24.60" lengthAdjust="spacingAndGlyphs">− 0.5</text>
<text x="114.35" y="602" font-size="13.5" textLength="15.80" lengthAdjust="spacingAndGlyphs">− 1</text>
<text x="131.55" y="618.5" font-size="13.5" textLength="6.90" lengthAdjust="spacingAndGlyphs">0</text>
<text x="245.45" y="619" font-size="13.5" textLength="25.00" lengthAdjust="spacingAndGlyphs">1×10</text>
<text x="269.55" y="612" font-size="10.5" textLength="12.30" lengthAdjust="spacingAndGlyphs">−5</text>
<text x="373.55" y="619" font-size="13.5" textLength="25.20" lengthAdjust="spacingAndGlyphs">2×10</text>
<text x="398.55" y="612" font-size="10.5" textLength="12.70" lengthAdjust="spacingAndGlyphs">−5</text>
<text x="502.55" y="619" font-size="13.5" textLength="25.40" lengthAdjust="spacingAndGlyphs">3×10</text>
<text x="527.55" y="612" font-size="10.5" textLength="12.90" lengthAdjust="spacingAndGlyphs">−5</text>
<text x="338.55" y="639" font-size="13.5" textLength="4.40" lengthAdjust="spacingAndGlyphs">t</text>
<text x="79.55" y="516.8" font-size="13.5" textLength="29.90" lengthAdjust="spacingAndGlyphs">f11(t)</text>
<text x="653.45" y="441.5" font-size="13.5" textLength="5.20" lengthAdjust="spacingAndGlyphs">1</text>
<text x="643.45" y="481.6" font-size="13.5" textLength="15.30" lengthAdjust="spacingAndGlyphs">0.5</text>
<text x="652.75" y="521.7" font-size="13.5" textLength="6.00" lengthAdjust="spacingAndGlyphs">0</text>
<text x="633.35" y="562" font-size="13.5" textLength="25.30" lengthAdjust="spacingAndGlyphs">− 0.5</text>
<text x="642.25" y="602" font-size="13.5" textLength="16.40" lengthAdjust="spacingAndGlyphs">− 1</text>
<text x="659.35" y="618.5" font-size="13.5" textLength="7.60" lengthAdjust="spacingAndGlyphs">0</text>
<text x="777.85" y="619" font-size="13.5" textLength="25.30" lengthAdjust="spacingAndGlyphs">1×10</text>
<text x="802.95" y="612" font-size="10.5" textLength="12.00" lengthAdjust="spacingAndGlyphs">−5</text>
<text x="911.45" y="619" font-size="13.5" textLength="25.20" lengthAdjust="spacingAndGlyphs">2×10</text>
<text x="936.55" y="612" font-size="10.5" textLength="12.60" lengthAdjust="spacingAndGlyphs">−5</text>
<text x="1045.55" y="619" font-size="13.5" textLength="25.40" lengthAdjust="spacingAndGlyphs">3×10</text>
<text x="1070.55" y="612" font-size="10.5" textLength="11.90" lengthAdjust="spacingAndGlyphs">−5</text>
<text x="874.55" y="639" font-size="13.5" textLength="4.40" lengthAdjust="spacingAndGlyphs">t</text>
<text x="607.55" y="521" font-size="13.5" textLength="29.80" lengthAdjust="spacingAndGlyphs">f12(t)</text>
<path d="M476.6 301.3 Q475.8 306.8 478.3 306.6 Q479.4 306.4 479.5 303.6 Q479.6 306.4 480.7 306.6 Q483.2 306.8 482.4 301.3" fill="none" stroke="#000" stroke-width="0.95"/>
<path d="M1150.6 298.8 Q1151.2 297.6 1152.6 297.6 H1157.3 M1154 297.6 V301.6 Q1154 302.6 1155.4 302.4" fill="none" stroke="#000" stroke-width="0.95"/>
</g>
<!-- page break lines (on top) -->
<g shape-rendering="crispEdges">
<line x1="588.5" y1="132" x2="588.5" y2="691" stroke="#c0c0c0" stroke-width="1"/>
<line x1="1174.5" y1="132" x2="1174.5" y2="691" stroke="#c0c0c0" stroke-width="1"/>
<line x1="2" y1="630.5" x2="1348" y2="630.5" stroke="#b4b4b4" stroke-width="1" stroke-dasharray="3,3"/>
</g>
<!-- cursor -->
<path d="M598 686.5 H607 M602.5 682 V691" stroke="#ff0000" stroke-width="1.3"/>
</svg>

</div>
<!-- vertical scrollbar -->
<div class="a" style="left:1348px;top:132px;width:16px;height:575px;background:#f0f0f0"></div>
<div class="a" style="left:1364px;top:132px;width:1px;height:576px;background:#dcdcdc"></div>
<div class="a" style="left:1365px;top:132px;width:1px;height:575px;background:#fafafa"></div>
<svg style="left:1351px;top:137px" width="10" height="8" viewBox="0 0 10 8"><path d="M1 6.5 L5 2.5 L9 6.5" fill="none" stroke="#606060" stroke-width="2.1"/></svg>
<div class="a" style="left:1348px;top:508px;width:15px;height:17px;background:#cdcdcd"></div>
<svg style="left:1351px;top:678px" width="10" height="8" viewBox="0 0 10 8"><path d="M1 1.5 L5 5.5 L9 1.5" fill="none" stroke="#606060" stroke-width="2.1"/></svg>
<!-- horizontal scrollbar -->
<div class="a" style="left:2px;top:691px;width:1346px;height:16px;background:#f0f0f0"></div>
<svg style="left:6px;top:694px" width="8" height="10" viewBox="0 0 8 10"><path d="M6 1.3 L2.5 4.8 L6 8.3" fill="none" stroke="#606060" stroke-width="2.1"/></svg>
<div class="a" style="left:19px;top:691px;width:17px;height:15px;background:#cdcdcd"></div>
<svg style="left:1335px;top:694px" width="8" height="10" viewBox="0 0 8 10"><path d="M2 1.3 L5.5 4.8 L2 8.3" fill="none" stroke="#606060" stroke-width="2.1"/></svg>

<!-- status bar -->
<div class="a" style="left:0;top:707px;width:1366px;height:1px;background:#dcdcdc"></div>
<div class="a" style="left:0;top:708px;width:1366px;height:1px;background:#fff"></div>
<div class="a" style="left:0;top:709px;width:1366px;height:1px;background:#d8d8d8"></div>
<div class="a" style="left:0;top:710px;width:1366px;height:18px;background:#f0f0f0"></div>
<div class="a" style="left:1365px;top:711px;width:1px;height:17px;background:#d8d8d8"></div>
<div class="t" id="status" style="left:2px;top:714px;font-size:12px;transform:scaleX(0.975);transform-origin:0 0">Нажмите F1 для справки.</div>
<div class="a" style="left:1209px;top:711px;width:1px;height:17px;background:#d8d8d8"></div>
<div class="a" style="left:1246px;top:711px;width:1px;height:17px;background:#d8d8d8"></div>
<div class="a" style="left:1282px;top:711px;width:1px;height:17px;background:#d8d8d8"></div>
<div class="t" id="avto" style="left:1180px;top:714px">Авто</div>
<div class="t" id="num" style="left:1251px;top:714px">NUM</div>
<div class="t" id="page" style="left:1287px;top:714px;transform:scaleX(0.97);transform-origin:0 0">Страница 5</div>

<!-- ============ taskbar ============ -->
<div class="a" style="left:0;top:728px;width:1366px;height:40px;background:#242321"></div>
<!-- start -->
<svg style="left:16px;top:739px" width="17" height="17" viewBox="0 0 17 17">
 <path d="M0 2.3 L7 1.3 V8 H0 Z M8 1.1 L16.5 0 V8 H8 Z M0 9 H7 V15.7 L0 14.7 Z M8 9 H16.5 V17 L8 15.9 Z" fill="#fff"/>
</svg>
<!-- search -->
<svg style="left:63px;top:739px" width="18" height="18" viewBox="0 0 18 18">
 <circle cx="11" cy="6.6" r="5.6" fill="none" stroke="#fff" stroke-width="1.3"/>
 <path d="M7 10.6 L1 16.8" stroke="#fff" stroke-width="1.4"/>
</svg>
<!-- task view -->
<svg style="left:111px;top:739px" width="18" height="18" viewBox="0 0 18 18" shape-rendering="crispEdges">
 <path d="M0 1.5 H12 M0 15.5 H12 M1.5 4.5 H11.5 V12.5 H1.5 Z M15.5 1 V2 M15.5 5 V16" fill="none" stroke="#fff" stroke-width="1.2"/>
 <rect x="14" y="3" width="3" height="2" fill="#fff"/>
</svg>
<!-- explorer -->
<svg style="left:160px;top:739px" width="22" height="18" viewBox="0 0 22 18">
 <path d="M0 1 Q0 0 1 0 H7 L9 1.5 H20.5 Q21.5 1.5 21.5 2.5 V16.5 Q21.5 17.5 20.5 17.5 H1 Q0 17.5 0 16.5 Z" fill="#f8d775"/>
 <path d="M0 3.5 H21.5 V16.5 Q21.5 17.5 20.5 17.5 H1 Q0 17.5 0 16.5 Z" fill="#fde69b"/>
 <rect x="1.5" y="0.8" width="5" height="1.3" fill="#3fa9f5"/>
 <path d="M4.5 18 V10.5 H17 V18 H14 V13.5 H7.5 V18 Z" fill="#2d9cdb"/>
</svg>
<!-- chrome -->
<svg style="left:208px;top:736px" width="24" height="24" viewBox="0 0 24 24">
 <path d="M12 12 L2.3 6.5 A11.3 11.3 0 0 1 21.8 6.5 Z" fill="#db4437"/>
 <path d="M12 12 L21.8 6.5 A11.3 11.3 0 0 1 12 23.3 Z" fill="#fcc934"/>
 <path d="M12 12 L12 23.3 A11.3 11.3 0 0 1 2.3 6.5 Z" fill="#1ea362"/>
 <circle cx="12" cy="12" r="5.3" fill="#fff"/>
 <circle cx="12" cy="12" r="4.2" fill="#4a8af4"/>
</svg>
<!-- word -->
<svg style="left:257px;top:736px" width="23" height="22" viewBox="0 0 23 22">
 <defs><linearGradient id="wg" x1="0" y1="0" x2="1" y2="1"><stop offset="0" stop-color="#d8e6f8"/><stop offset="0.6" stop-color="#8fb3e8"/><stop offset="1" stop-color="#2e62c0"/></linearGradient></defs>
 <path d="M4 0.5 H21.5 V21.5 H0.5 V4 Q0.5 0.5 4 0.5 Z" fill="url(#wg)" stroke="#1d4fa8" stroke-width="1"/>
 <path d="M1 13 Q8 11 15 14 L21 13 V21 H1 Z" fill="#fff"/>
 <path d="M3.5 3.5 H7.2 L8.8 11 L10.8 4 H13 L14.8 11 L16.4 3.5 H19.2 L16.2 15.5 H13.6 L11.9 9 L10.1 15.5 H7.4 Z" fill="#1a5ec8"/>
 <path d="M4 18 H15 M5 20 H17" stroke="#b8cce8" stroke-width="0.7"/>
</svg>
<!-- mathcad (active) -->
<div class="a" style="left:294px;top:728px;width:48px;height:40px;background:#4b4a48"></div>
<svg style="left:306px;top:739px" width="24" height="22" viewBox="0 0 24 22">
 <defs><linearGradient id="mg" x1="0" y1="0" x2="0" y2="1"><stop offset="0" stop-color="#a8c0d0"/><stop offset="0.45" stop-color="#4f7a98"/><stop offset="1" stop-color="#375d78"/></linearGradient></defs>
 <path d="M0 0.5 H6.5 L12 13 L17 0.5 H23.5 V21 H19 V8 L14 21 H10 L5 8 V21 H1.5 V3.5 Z" fill="url(#mg)"/>
</svg>
<div class="a" style="left:151px;top:766px;width:40px;height:2px;background:#99ebcc"></div>
<div class="a" style="left:200px;top:766px;width:40px;height:2px;background:#99ebcc"></div>
<div class="a" style="left:249px;top:766px;width:40px;height:2px;background:#99ebcc"></div>
<div class="a" style="left:294px;top:766px;width:48px;height:2px;background:#99ebcc"></div>

<div class="a" style="left:1361px;top:728px;width:1px;height:40px;background:#6a6968"></div>
<!-- tray -->
<svg style="left:1083px;top:740px" width="16" height="16" viewBox="0 0 16 16">
 <circle cx="10.5" cy="3.5" r="2.8" fill="none" stroke="#fff" stroke-width="1.1"/>
 <path d="M6.5 11 Q7 6.8 10.5 6.8 Q14.5 6.8 15 11" fill="none" stroke="#fff" stroke-width="1.1"/>
 <circle cx="4.5" cy="8.5" r="2.5" fill="#242321" stroke="#fff" stroke-width="1.1"/>
 <path d="M0.6 15.5 Q1 11.5 4.5 11.5 Q8 11.5 8.4 15.5" fill="none" stroke="#fff" stroke-width="1.1"/>
</svg>
<svg style="left:1121px;top:744px" width="13" height="8" viewBox="0 0 13 8"><path d="M0.7 7.3 L6.5 1.3 L12.3 7.3" fill="none" stroke="#fff" stroke-width="1.2"/></svg>
<svg style="left:1143px;top:744px" width="17" height="10" viewBox="0 0 17 10" shape-rendering="crispEdges">
 <rect x="0.5" y="0.5" width="14" height="8" fill="none" stroke="#fff"/>
 <rect x="2" y="2" width="11" height="5" fill="#fff"/>
 <rect x="15" y="3" width="2" height="3" fill="#fff"/>
</svg>
<svg style="left:1169px;top:742px" width="15" height="13" viewBox="0 0 15 13">
 <path d="M1 12.5 A12 12 0 0 1 13 0.8 M3.5 12.5 A9.5 9.5 0 0 1 13 3.3 M6 12.5 A7 7 0 0 1 13 5.8 M8.5 12.5 A4.5 4.5 0 0 1 13 8.3" fill="none" stroke="#bbb" stroke-width="1"/>
 <circle cx="12" cy="11" r="1.6" fill="#fff"/>
</svg>
<svg style="left:1190px;top:742px" width="16" height="12" viewBox="0 0 16 12">
 <path d="M0.6 4 H3 L7.5 0.7 V11.3 L3 8 H0.6 Z" fill="none" stroke="#fff" stroke-width="1.1"/>
 <path d="M10 3.5 L15 8.5 M15 3.5 L10 8.5" stroke="#fff" stroke-width="1.1"/>
</svg>
<div class="t" id="eng" style="left:1217px;top:742px;color:#fff;font-size:12px;transform:scaleX(0.89);transform-origin:0 0">ENG</div>
<div class="t" id="clock" style="left:1266px;top:733px;color:#fff;font-size:12px;transform:scaleX(0.88);transform-origin:0 0">14:33</div>
<div class="t" id="date" style="left:1253px;top:751px;color:#fff;font-size:12px;transform:scaleX(0.89);transform-origin:0 0">28.04.2019</div>
<svg style="left:1324px;top:740px" width="27" height="24" viewBox="0 0 27 24">
 <path d="M1 0.5 H18.5 V12.5 H7 L3 16 V12.5 H1 Z" fill="#fff"/>
 <path d="M4 3.5 H15 M4 6 H15 M4 8.5 H12" stroke="#242321" stroke-width="1"/>
 <circle cx="17.5" cy="15.5" r="7.5" fill="#2a2724" stroke="#9a9a9a" stroke-width="1.2"/>
 <text x="14.5" y="20" font-family="Liberation Sans" font-size="11" fill="#fff">1</text>
</svg>

<!-- ============ floating "График" palette ============ -->
<div class="a" style="left:1240px;top:160px;width:73px;height:104px;background:#f0f0f0;box-shadow:2px 3px 9px rgba(0,0,0,0.28)"></div>
<div class="a" style="left:1240px;top:160px;width:73px;height:1px;background:#2ecc71"></div>
<div class="a" style="left:1240px;top:161px;width:73px;height:30px;background:#fff"></div>
<div class="t" id="grtitle" style="left:1248px;top:170px;font-size:12px;color:#000">График</div>
<div class="a" style="left:1293px;top:168px;width:19px;height:19px;background:#c75050"></div>
<svg style="left:1299px;top:174px" width="7" height="7" viewBox="0 0 7 7"><path d="M1 1 L6 6 M6 1 L1 6" stroke="#fff" stroke-width="1.5"/></svg>
<!-- row 1 -->
<svg style="left:1245px;top:197px" width="16" height="15" viewBox="0 0 16 15">
 <path d="M1.5 0 V13.5 H15" fill="none" stroke="#000" stroke-width="1.1"/>
 <path d="M2 11 L6 4 L9 7 L14.5 3" fill="none" stroke="#0000ff" stroke-width="1"/>
 <path d="M2 5 L14.5 12" fill="none" stroke="#ff0000" stroke-width="1"/>
</svg>
<svg style="left:1268px;top:196px" width="17" height="16" viewBox="0 0 17 16">
 <circle cx="8" cy="8" r="6" fill="none" stroke="#a8a8a8" stroke-width="1.3"/>
 <path d="M8 0.5 V15.5 M0.5 8 H15.5 M3 3 L13 13 M13 3 L3 13" stroke="#a8a8a8" stroke-width="1.1"/>
</svg>
<svg style="left:1290px;top:196px" width="18" height="16" viewBox="0 0 18 16">
 <path d="M2 15 Q6 10 10 14 M1 9 L9 15 M5 5 L6 15 M2 12 L12 10" fill="none" stroke="#a8a8a8" stroke-width="1"/>
 <path d="M9 10 L16 2 L17 3.5 L10 11 Z" fill="#a8a8a8"/>
</svg>
<!-- row 2 -->
<svg style="left:1245px;top:219px" width="16" height="16" viewBox="0 0 16 16">
 <circle cx="7.5" cy="7.5" r="6.8" fill="none" stroke="#000" stroke-width="1.2"/>
 <path d="M7.5 1 V14 M1 7.5 H14" stroke="#008000" stroke-width="1"/>
 <path d="M3 10 Q5 2 8 4 Q11 6 12 10" fill="none" stroke="#ff0000" stroke-width="1"/>
</svg>
<svg style="left:1268px;top:219px" width="17" height="16" viewBox="0 0 17 16">
 <path d="M0 13 Q3 5 7 2 Q12 0 16.5 3 V12 Q12 11 9 15 Q5 12 0 13Z" fill="#22cc44" stroke="#000" stroke-width="1"/>
 <path d="M9 2 Q13 1 16 3.5 V7 Q12 6 9 8 Z" fill="#ffee00"/>
 <path d="M0.5 12.5 Q4 11 8 14.5 L10 10 Q6 9 2.5 9 Z" fill="#00cccc"/>
 <path d="M3 8 L14 4 M5 12 L16 8 M5 4 L9 14 M10 2 L13 12" stroke="#000" stroke-width="0.6"/>
</svg>
<svg style="left:1290px;top:218px" width="18" height="17" viewBox="0 0 18 17">
 <rect x="0.8" y="0.8" width="16" height="15.4" fill="#fff" stroke="#000" stroke-width="1.3"/>
 <path d="M4 12 Q2 6 8 3.5 Q14 2 14 6 Q14 10 8 13 Q5 14.5 4 12Z" fill="none" stroke="#0000c0" stroke-width="1"/>
 <ellipse cx="8.5" cy="7.5" rx="2.5" ry="2" fill="none" stroke="#0000c0" stroke-width="1"/>
 <path d="M1 15 L4 11 M13 15 L17 9 M1 4 L3 1" stroke="#0000c0" stroke-width="0.8"/>
</svg>
<!-- row 3 -->
<svg style="left:1245px;top:242px" width="16" height="16" viewBox="0 0 16 16" shape-rendering="crispEdges">
 <rect x="0.5" y="5.5" width="4" height="10" fill="#ff0000" stroke="#000"/>
 <rect x="4.5" y="1.5" width="4" height="14" fill="#0000ff" stroke="#000"/>
 <rect x="8.5" y="3.5" width="3" height="12" fill="#00aa00" stroke="#000"/>
 <rect x="11.5" y="7.5" width="4" height="8" fill="#00cc00" stroke="#000"/>
</svg>
<svg style="left:1268px;top:242px" width="17" height="16" viewBox="0 0 17 16">
 <path d="M6 1 V11 L1 15.5 M6 11 H16.5" fill="none" stroke="#000" stroke-width="1.1"/>
 <g fill="#ff0000"><rect x="2" y="2" width="2" height="2"/><rect x="9" y="1" width="2" height="2"/><rect x="11" y="5" width="2" height="2"/><rect x="1" y="7" width="2" height="2"/><rect x="8" y="7" width="2" height="2"/><rect x="14" y="8" width="2" height="2"/><rect x="3" y="11" width="2" height="2"/><rect x="9" y="13" width="2" height="2"/></g>
</svg>
<svg style="left:1290px;top:242px" width="17" height="16" viewBox="0 0 17 16">
 <path d="M1 0 V15 H17" fill="none" stroke="#000" stroke-width="1.2"/>
 <path d="M4 2 L7 5 M4 2 V4 M4 2 H6 M14 2 L11 5 M14 2 V4 M14 2 H12 M4 12 L7 9 M4 12 V10 M4 12 H6 M14 12 L11 9 M14 12 V10 M14 12 H12" fill="none" stroke="#000" stroke-width="0.9"/>
</svg>

</body></html>
